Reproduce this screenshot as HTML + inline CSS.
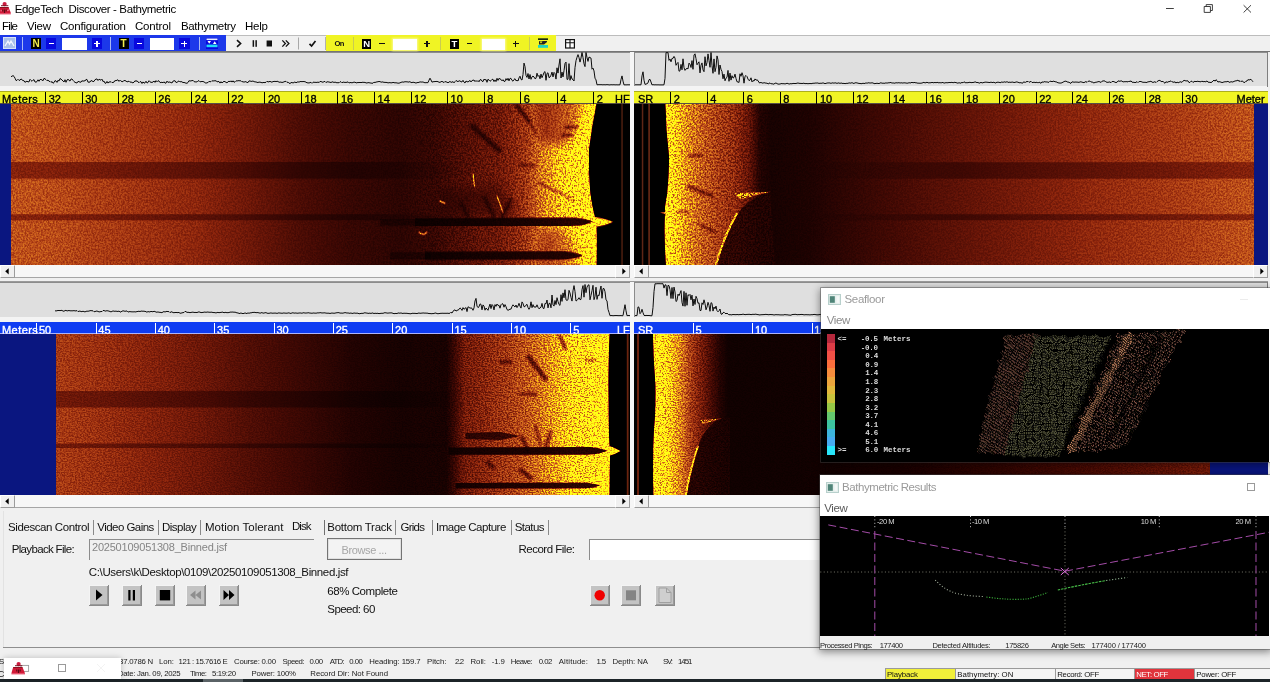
<!DOCTYPE html>
<html><head><meta charset="utf-8"><title>EdgeTech Discover - Bathymetric</title>
<style>
html,body{margin:0;padding:0;}
body{width:1270px;height:682px;overflow:hidden;background:#f0f0f0;position:relative;font-family:'Liberation Sans',sans-serif;}
div,span,svg{position:absolute;display:block;}
body{will-change:transform;}
span{white-space:pre;}
</style></head>
<body>
<div style="left:0px;top:0px;width:1270px;height:35px;background:#fff;"></div>
<svg style="left:0;top:0" width="12" height="16" viewBox="0 0 12 16"><ellipse cx="4.6" cy="4.1" rx="2.1" ry="2.2" fill="#cc1c40"/><rect x="1" y="5.2" width="7.3" height="1" fill="#7c1424"/><path d="M0 7 L8.4 7 L10.7 12.6 L10.7 13 L0 13 Z" fill="#d21a38"/><rect x="0" y="7" width="8.6" height="1.1" fill="#8a1020"/><path d="M2.2 9.6 h1.1 v2 h-1.1 z M5.6 9.6 h1.1 v2 h-1.1 z M3.9 9.4 h1.2 v3.8 h-1.2 z" fill="#5a0c14"/><path d="M0.5 10.2 h1.4 v1 h-1.4 z M7.2 10 l1.8 -0.6 v1.2 l-1.8 .6 z" fill="#f08098"/><rect x="0" y="13" width="10.8" height="1.4" fill="#e4506a"/></svg>
<span style="left:14.80px;top:3.83px;font-size:11.5px;line-height:11.5px;color:#000;letter-spacing:-0.378px;">EdgeTech  Discover - Bathymetric</span>
<svg style="left:1160px;top:0" width="110" height="18" viewBox="0 0 110 18"><g stroke="#2a2a2a" stroke-width="0.9" fill="none"><path d="M6 8.5 H13.8"/><path d="M44.2 6.5 H50.4 V12.4 H44.2 Z"/><path d="M46.2 6.5 V4.6 H52.4 V10.5 H50.4"/><path d="M83.6 5.2 L91 12.5 M91 5.2 L83.6 12.5"/></g></svg>
<span style="left:2.00px;top:21.32px;font-size:11.5px;line-height:11.5px;color:#000;letter-spacing:-0.844px;">File</span>
<span style="left:27.00px;top:21.32px;font-size:11.5px;line-height:11.5px;color:#000;letter-spacing:-0.240px;">View</span>
<span style="left:60.00px;top:21.32px;font-size:11.5px;line-height:11.5px;color:#000;letter-spacing:-0.201px;">Configuration</span>
<span style="left:135.00px;top:21.32px;font-size:11.5px;line-height:11.5px;color:#000;letter-spacing:-0.180px;">Control</span>
<span style="left:181.00px;top:21.32px;font-size:11.5px;line-height:11.5px;color:#000;letter-spacing:-0.352px;">Bathymetry</span>
<span style="left:245.00px;top:21.32px;font-size:11.5px;line-height:11.5px;color:#000;letter-spacing:-0.219px;">Help</span>
<div style="left:0px;top:35px;width:1270px;height:17px;background:#f0f0f0;"></div>
<div style="left:0px;top:35px;width:225.5px;height:16.5px;background:#1c38ea;"></div>
<div style="left:326px;top:35px;width:230px;height:16.5px;background:#f0f424;"></div>
<div style="left:0px;top:51px;width:1270px;height:1.4px;background:#747474;"></div>
<div style="left:225.5px;top:35px;width:100px;height:1px;background:#bcbcbc;"></div>
<div style="left:556px;top:35px;width:714px;height:1px;background:#bcbcbc;"></div>
<svg style="left:3px;top:37px" width="13" height="12" viewBox="0 0 13 12"><rect x="0.5" y="0.5" width="12" height="11" fill="#a9c0ea" stroke="#d8e2f6"/><path d="M2 9 L5 4 L6.5 7 L8 4 L11 9" stroke="#f4f6ff" stroke-width="1.3" fill="none"/></svg>
<div style="left:22px;top:37px;width:1px;height:13px;background:#a8b8f4;"></div>
<div style="left:110px;top:37px;width:1px;height:13px;background:#a8b8f4;"></div>
<div style="left:198.5px;top:37px;width:1px;height:13px;background:#a8b8f4;"></div>
<div style="left:31px;top:38px;width:10px;height:11px;background:#000;"></div>
<span style="left:32.40px;top:39.10px;font-size:10px;line-height:10px;color:#f4ee4a;font-weight:700;">N</span>
<div style="left:119px;top:38px;width:10px;height:11px;background:#000;"></div>
<span style="left:120.40px;top:39.10px;font-size:10px;line-height:10px;color:#f4ee4a;font-weight:700;">T</span>
<div style="left:46px;top:38px;width:10px;height:11px;background:#0808de;"></div>
<div style="left:48.5px;top:42.7px;width:5.5px;height:1.6px;background:#fff;"></div>
<div style="left:134px;top:38px;width:10px;height:11px;background:#0808de;"></div>
<div style="left:136.5px;top:42.7px;width:5.5px;height:1.6px;background:#fff;"></div>
<div style="left:91.5px;top:38px;width:10.5px;height:11px;background:#0808de;"></div>
<div style="left:93.8px;top:42.7px;width:6px;height:1.6px;background:#fff;"></div>
<div style="left:96.0px;top:40.5px;width:1.6px;height:6px;background:#fff;"></div>
<div style="left:179.0px;top:38px;width:10.5px;height:11px;background:#0808de;"></div>
<div style="left:181.3px;top:42.7px;width:6px;height:1.6px;background:#fff;"></div>
<div style="left:183.5px;top:40.5px;width:1.6px;height:6px;background:#fff;"></div>
<div style="left:61.5px;top:38px;width:25px;height:12px;background:#fff;"></div>
<div style="left:150px;top:38px;width:24px;height:12px;background:#fff;"></div>
<svg style="left:206px;top:38px" width="12" height="11" viewBox="0 0 12 11"><rect width="12" height="11" fill="#0808de"/><rect x="0.5" y="0.5" width="11" height="1.6" fill="#e8f0ff"/><path d="M1.5 3 L5 3 L3.2 5.8 Z M7 6 L10.5 6 L8.7 3.2 Z" fill="#fff"/><rect x="0.5" y="6.6" width="11" height="2.6" fill="#22d8f8"/></svg>
<svg style="left:230px;top:36px" width="95" height="15" viewBox="0 0 95 15"><g fill="none" stroke="#111" stroke-width="1.6"><path d="M7 4.2 L10.6 7.5 L7 10.8"/><path d="M52.3 4.4 L55.4 7.5 L52.3 10.6 M55.8 4.4 L58.9 7.5 L55.8 10.6" stroke-width="1.3"/><path d="M79.5 7.8 L81.6 10 L85.5 5" stroke-width="1.7"/></g><rect x="22.6" y="4.2" width="1.5" height="6.6" fill="#111"/><rect x="25.4" y="4.2" width="1.5" height="6.6" fill="#111"/><rect x="36.6" y="4.5" width="5.4" height="6" fill="#111"/><rect x="68" y="1.5" width="1" height="12" fill="#a8a8a8"/></svg>
<span style="left:334.50px;top:40.18px;font-size:7.6px;line-height:7.6px;color:#111;font-weight:700;letter-spacing:-0.547px;">On</span>
<div style="left:325px;top:37px;width:1px;height:13px;background:#b0b0b0;"></div>
<div style="left:352.5px;top:37px;width:1px;height:13px;background:#c9cc52;"></div>
<div style="left:440px;top:37px;width:1px;height:13px;background:#c9cc52;"></div>
<div style="left:528.5px;top:37px;width:1px;height:13px;background:#c9cc52;"></div>
<div style="left:362px;top:38.5px;width:9px;height:10px;background:#000;"></div>
<span style="left:363.30px;top:39.33px;font-size:9.5px;line-height:9.5px;color:#fff;font-weight:700;">N</span>
<div style="left:450px;top:38.5px;width:9px;height:10px;background:#000;"></div>
<span style="left:451.60px;top:39.33px;font-size:9.5px;line-height:9.5px;color:#fff;font-weight:700;">T</span>
<div style="left:379px;top:42.8px;width:5.5px;height:1.5px;background:#111;"></div>
<div style="left:466.5px;top:42.8px;width:5.5px;height:1.5px;background:#111;"></div>
<div style="left:424px;top:42.8px;width:6px;height:1.5px;background:#111;"></div>
<div style="left:426.25px;top:40.5px;width:1.5px;height:6px;background:#111;"></div>
<div style="left:512.5px;top:42.8px;width:6px;height:1.5px;background:#111;"></div>
<div style="left:514.75px;top:40.5px;width:1.5px;height:6px;background:#111;"></div>
<div style="left:393px;top:38.5px;width:24px;height:11px;background:#fff;box-shadow:0 0 2px 1px #fafa90"></div>
<div style="left:482px;top:38.5px;width:22.5px;height:11px;background:#fff;box-shadow:0 0 2px 1px #fafa90"></div>
<svg style="left:537.5px;top:38px" width="10" height="11" viewBox="0 0 10 11"><rect x="0" y="0.3" width="10" height="1.7" fill="#1a2a10"/><path d="M1 3 L9 3 L9 4 L6 6.6 L1 6.6 Z" fill="#222"/><path d="M1.5 3.4 L4.5 3.4 L3 5.6 Z" fill="#f1f322"/><rect x="0" y="7" width="10" height="2.8" fill="#1fd6c0"/></svg>
<svg style="left:564.5px;top:38.5px" width="10" height="10" viewBox="0 0 10 10"><rect x="0.6" y="0.6" width="8.8" height="8.4" fill="#fff" stroke="#111" stroke-width="1.2"/><path d="M5 0.6 V9 M0.6 3.8 H9.4" stroke="#111" stroke-width="1.1"/></svg>
<div style="left:0px;top:52px;width:630px;height:35px;background:#dfdfdf;"></div>
<div style="left:0px;top:51.5px;width:630px;height:1.2px;background:#8c8c8c;"></div>
<div style="left:0px;top:86px;width:630px;height:5px;background:#f4f4f4;"></div>
<div style="left:634px;top:52px;width:634px;height:35px;background:#dfdfdf;"></div>
<div style="left:634px;top:51.5px;width:634px;height:1.2px;background:#8c8c8c;"></div>
<div style="left:634px;top:52px;width:1.2px;height:35px;background:#8c8c8c;"></div>
<div style="left:634px;top:86px;width:634px;height:5px;background:#f4f4f4;"></div>
<div style="left:630px;top:52px;width:3.8px;height:226px;background:#f6f6f6;"></div>
<div style="left:630px;top:282px;width:3.8px;height:226px;background:#f6f6f6;"></div>
<div style="left:1268px;top:52px;width:2px;height:460px;background:#f0f0f0;"></div>
<div style="left:0px;top:278px;width:1270px;height:4px;background:#f0f0f0;"></div>
<div style="left:0px;top:281px;width:1268px;height:1px;background:#9a9a9a;"></div>
<div style="left:0px;top:282px;width:630px;height:36px;background:#dfdfdf;"></div>
<div style="left:0px;top:281.5px;width:630px;height:1.2px;background:#8c8c8c;"></div>
<div style="left:0px;top:317px;width:630px;height:5px;background:#f4f4f4;"></div>
<div style="left:634px;top:282px;width:634px;height:36px;background:#dfdfdf;"></div>
<div style="left:634px;top:281.5px;width:634px;height:1.2px;background:#8c8c8c;"></div>
<div style="left:634px;top:282px;width:1.2px;height:36px;background:#8c8c8c;"></div>
<div style="left:634px;top:317px;width:634px;height:5px;background:#f4f4f4;"></div>
<div style="left:1267.3px;top:282px;width:1.2px;height:36px;background:#7a7a7a;"></div>
<div style="left:1267.3px;top:52px;width:1.2px;height:35px;background:#7e7e7e;"></div>
<div style="left:0px;top:91.3px;width:630px;height:12.2px;background:#f0f424;"></div>
<div style="left:634px;top:91.3px;width:633.5px;height:12.2px;background:#f0f424;"></div>
<div style="left:0px;top:322.3px;width:630px;height:11.7px;background:#0e3cf2;"></div>
<div style="left:634px;top:322.3px;width:633.5px;height:11.7px;background:#0e3cf2;"></div>
<span style="left:2.00px;top:94.05px;font-size:11px;line-height:11px;color:#000;letter-spacing:0.435px;-webkit-text-stroke:0.35px #000;">Meters</span>
<div style="left:45.15999999999997px;top:91.5px;width:1px;height:12px;background:#000;"></div>
<span style="left:48.66px;top:94.05px;font-size:11px;line-height:11px;color:#000;-webkit-text-stroke:0.35px #000;">32</span>
<div style="left:81.69999999999993px;top:91.5px;width:1px;height:12px;background:#000;"></div>
<span style="left:85.20px;top:94.05px;font-size:11px;line-height:11px;color:#000;-webkit-text-stroke:0.35px #000;">30</span>
<div style="left:118.23999999999995px;top:91.5px;width:1px;height:12px;background:#000;"></div>
<span style="left:121.74px;top:94.05px;font-size:11px;line-height:11px;color:#000;-webkit-text-stroke:0.35px #000;">28</span>
<div style="left:154.77999999999997px;top:91.5px;width:1px;height:12px;background:#000;"></div>
<span style="left:158.28px;top:94.05px;font-size:11px;line-height:11px;color:#000;-webkit-text-stroke:0.35px #000;">26</span>
<div style="left:191.31999999999994px;top:91.5px;width:1px;height:12px;background:#000;"></div>
<span style="left:194.82px;top:94.05px;font-size:11px;line-height:11px;color:#000;-webkit-text-stroke:0.35px #000;">24</span>
<div style="left:227.85999999999996px;top:91.5px;width:1px;height:12px;background:#000;"></div>
<span style="left:231.36px;top:94.05px;font-size:11px;line-height:11px;color:#000;-webkit-text-stroke:0.35px #000;">22</span>
<div style="left:264.4px;top:91.5px;width:1px;height:12px;background:#000;"></div>
<span style="left:267.90px;top:94.05px;font-size:11px;line-height:11px;color:#000;-webkit-text-stroke:0.35px #000;">20</span>
<div style="left:300.93999999999994px;top:91.5px;width:1px;height:12px;background:#000;"></div>
<span style="left:304.44px;top:94.05px;font-size:11px;line-height:11px;color:#000;-webkit-text-stroke:0.35px #000;">18</span>
<div style="left:337.47999999999996px;top:91.5px;width:1px;height:12px;background:#000;"></div>
<span style="left:340.98px;top:94.05px;font-size:11px;line-height:11px;color:#000;-webkit-text-stroke:0.35px #000;">16</span>
<div style="left:374.02px;top:91.5px;width:1px;height:12px;background:#000;"></div>
<span style="left:377.52px;top:94.05px;font-size:11px;line-height:11px;color:#000;-webkit-text-stroke:0.35px #000;">14</span>
<div style="left:410.55999999999995px;top:91.5px;width:1px;height:12px;background:#000;"></div>
<span style="left:414.06px;top:94.05px;font-size:11px;line-height:11px;color:#000;-webkit-text-stroke:0.35px #000;">12</span>
<div style="left:447.09999999999997px;top:91.5px;width:1px;height:12px;background:#000;"></div>
<span style="left:450.60px;top:94.05px;font-size:11px;line-height:11px;color:#000;-webkit-text-stroke:0.35px #000;">10</span>
<div style="left:483.64px;top:91.5px;width:1px;height:12px;background:#000;"></div>
<span style="left:487.14px;top:94.05px;font-size:11px;line-height:11px;color:#000;-webkit-text-stroke:0.35px #000;">8</span>
<div style="left:520.18px;top:91.5px;width:1px;height:12px;background:#000;"></div>
<span style="left:523.68px;top:94.05px;font-size:11px;line-height:11px;color:#000;-webkit-text-stroke:0.35px #000;">6</span>
<div style="left:556.7199999999999px;top:91.5px;width:1px;height:12px;background:#000;"></div>
<span style="left:560.22px;top:94.05px;font-size:11px;line-height:11px;color:#000;-webkit-text-stroke:0.35px #000;">4</span>
<div style="left:593.26px;top:91.5px;width:1px;height:12px;background:#000;"></div>
<span style="left:596.76px;top:94.05px;font-size:11px;line-height:11px;color:#000;-webkit-text-stroke:0.35px #000;">2</span>
<span style="left:615.00px;top:94.05px;font-size:11px;line-height:11px;color:#000;-webkit-text-stroke:0.35px #000;">HF</span>
<span style="left:638.00px;top:94.05px;font-size:11px;line-height:11px;color:#000;-webkit-text-stroke:0.35px #000;">SR</span>
<div style="left:670.24px;top:91.5px;width:1px;height:12px;background:#000;"></div>
<span style="left:673.74px;top:94.05px;font-size:11px;line-height:11px;color:#000;-webkit-text-stroke:0.35px #000;">2</span>
<div style="left:706.7800000000001px;top:91.5px;width:1px;height:12px;background:#000;"></div>
<span style="left:710.28px;top:94.05px;font-size:11px;line-height:11px;color:#000;-webkit-text-stroke:0.35px #000;">4</span>
<div style="left:743.32px;top:91.5px;width:1px;height:12px;background:#000;"></div>
<span style="left:746.82px;top:94.05px;font-size:11px;line-height:11px;color:#000;-webkit-text-stroke:0.35px #000;">6</span>
<div style="left:779.86px;top:91.5px;width:1px;height:12px;background:#000;"></div>
<span style="left:783.36px;top:94.05px;font-size:11px;line-height:11px;color:#000;-webkit-text-stroke:0.35px #000;">8</span>
<div style="left:816.4000000000001px;top:91.5px;width:1px;height:12px;background:#000;"></div>
<span style="left:819.90px;top:94.05px;font-size:11px;line-height:11px;color:#000;-webkit-text-stroke:0.35px #000;">10</span>
<div style="left:852.94px;top:91.5px;width:1px;height:12px;background:#000;"></div>
<span style="left:856.44px;top:94.05px;font-size:11px;line-height:11px;color:#000;-webkit-text-stroke:0.35px #000;">12</span>
<div style="left:889.48px;top:91.5px;width:1px;height:12px;background:#000;"></div>
<span style="left:892.98px;top:94.05px;font-size:11px;line-height:11px;color:#000;-webkit-text-stroke:0.35px #000;">14</span>
<div style="left:926.02px;top:91.5px;width:1px;height:12px;background:#000;"></div>
<span style="left:929.52px;top:94.05px;font-size:11px;line-height:11px;color:#000;-webkit-text-stroke:0.35px #000;">16</span>
<div style="left:962.5600000000001px;top:91.5px;width:1px;height:12px;background:#000;"></div>
<span style="left:966.06px;top:94.05px;font-size:11px;line-height:11px;color:#000;-webkit-text-stroke:0.35px #000;">18</span>
<div style="left:999.1px;top:91.5px;width:1px;height:12px;background:#000;"></div>
<span style="left:1002.60px;top:94.05px;font-size:11px;line-height:11px;color:#000;-webkit-text-stroke:0.35px #000;">20</span>
<div style="left:1035.64px;top:91.5px;width:1px;height:12px;background:#000;"></div>
<span style="left:1039.14px;top:94.05px;font-size:11px;line-height:11px;color:#000;-webkit-text-stroke:0.35px #000;">22</span>
<div style="left:1072.18px;top:91.5px;width:1px;height:12px;background:#000;"></div>
<span style="left:1075.68px;top:94.05px;font-size:11px;line-height:11px;color:#000;-webkit-text-stroke:0.35px #000;">24</span>
<div style="left:1108.72px;top:91.5px;width:1px;height:12px;background:#000;"></div>
<span style="left:1112.22px;top:94.05px;font-size:11px;line-height:11px;color:#000;-webkit-text-stroke:0.35px #000;">26</span>
<div style="left:1145.26px;top:91.5px;width:1px;height:12px;background:#000;"></div>
<span style="left:1148.76px;top:94.05px;font-size:11px;line-height:11px;color:#000;-webkit-text-stroke:0.35px #000;">28</span>
<div style="left:1181.8px;top:91.5px;width:1px;height:12px;background:#000;"></div>
<span style="left:1185.30px;top:94.05px;font-size:11px;line-height:11px;color:#000;-webkit-text-stroke:0.35px #000;">30</span>
<span style="left:1236.50px;top:94.05px;font-size:11px;line-height:11px;color:#000;-webkit-text-stroke:0.35px #000;">Meter</span>
<div style="left:0px;top:102.8px;width:630px;height:1px;background:rgba(20,10,0,0.7);"></div>
<div style="left:634px;top:102.8px;width:633.5px;height:1px;background:rgba(20,10,0,0.7);"></div>
<div style="left:0px;top:91px;width:630px;height:0.9px;background:rgba(90,90,20,0.45);"></div>
<div style="left:634px;top:91px;width:633.5px;height:0.9px;background:rgba(90,90,20,0.45);"></div>
<span style="left:2.00px;top:324.65px;font-size:11px;line-height:11px;color:#fff;letter-spacing:0.435px;-webkit-text-stroke:0.35px #fff;">Meters</span>
<div style="left:36.299999999999955px;top:322.5px;width:1px;height:12px;background:#fff;"></div>
<span style="left:39.00px;top:324.65px;font-size:11px;line-height:11px;color:#fff;-webkit-text-stroke:0.35px #fff;">50</span>
<div style="left:95.64999999999998px;top:322.5px;width:1px;height:12px;background:#fff;"></div>
<span style="left:98.35px;top:324.65px;font-size:11px;line-height:11px;color:#fff;-webkit-text-stroke:0.35px #fff;">45</span>
<div style="left:155.0px;top:322.5px;width:1px;height:12px;background:#fff;"></div>
<span style="left:157.70px;top:324.65px;font-size:11px;line-height:11px;color:#fff;-webkit-text-stroke:0.35px #fff;">40</span>
<div style="left:214.34999999999997px;top:322.5px;width:1px;height:12px;background:#fff;"></div>
<span style="left:217.05px;top:324.65px;font-size:11px;line-height:11px;color:#fff;-webkit-text-stroke:0.35px #fff;">35</span>
<div style="left:273.7px;top:322.5px;width:1px;height:12px;background:#fff;"></div>
<span style="left:276.40px;top:324.65px;font-size:11px;line-height:11px;color:#fff;-webkit-text-stroke:0.35px #fff;">30</span>
<div style="left:333.04999999999995px;top:322.5px;width:1px;height:12px;background:#fff;"></div>
<span style="left:335.75px;top:324.65px;font-size:11px;line-height:11px;color:#fff;-webkit-text-stroke:0.35px #fff;">25</span>
<div style="left:392.4px;top:322.5px;width:1px;height:12px;background:#fff;"></div>
<span style="left:395.10px;top:324.65px;font-size:11px;line-height:11px;color:#fff;-webkit-text-stroke:0.35px #fff;">20</span>
<div style="left:451.75px;top:322.5px;width:1px;height:12px;background:#fff;"></div>
<span style="left:454.45px;top:324.65px;font-size:11px;line-height:11px;color:#fff;-webkit-text-stroke:0.35px #fff;">15</span>
<div style="left:511.09999999999997px;top:322.5px;width:1px;height:12px;background:#fff;"></div>
<span style="left:513.80px;top:324.65px;font-size:11px;line-height:11px;color:#fff;-webkit-text-stroke:0.35px #fff;">10</span>
<div style="left:570.4499999999999px;top:322.5px;width:1px;height:12px;background:#fff;"></div>
<span style="left:573.15px;top:324.65px;font-size:11px;line-height:11px;color:#fff;-webkit-text-stroke:0.35px #fff;">5</span>
<span style="left:617.00px;top:324.65px;font-size:11px;line-height:11px;color:#fff;-webkit-text-stroke:0.35px #fff;">LF</span>
<span style="left:638.00px;top:324.65px;font-size:11px;line-height:11px;color:#fff;-webkit-text-stroke:0.35px #fff;">SR</span>
<div style="left:693.0500000000001px;top:322.5px;width:1px;height:12px;background:#fff;"></div>
<span style="left:695.55px;top:324.65px;font-size:11px;line-height:11px;color:#fff;-webkit-text-stroke:0.35px #fff;">5</span>
<div style="left:752.4000000000001px;top:322.5px;width:1px;height:12px;background:#fff;"></div>
<span style="left:754.90px;top:324.65px;font-size:11px;line-height:11px;color:#fff;-webkit-text-stroke:0.35px #fff;">10</span>
<div style="left:811.75px;top:322.5px;width:1px;height:12px;background:#fff;"></div>
<span style="left:814.25px;top:324.65px;font-size:11px;line-height:11px;color:#fff;-webkit-text-stroke:0.35px #fff;">15</span>
<div style="left:0px;top:333px;width:630px;height:1.1px;background:rgba(225,220,255,0.75);"></div>
<div style="left:634px;top:333px;width:633.5px;height:1.1px;background:rgba(225,220,255,0.75);"></div>
<svg style="left:0px;top:52px" width="630" height="35" viewBox="0 52 630 35"><path d="M11.0 76.6 L12.0 76.3 L13.0 75.5 L14.0 76.4 L15.0 78.2 L16.0 80.5 L17.0 80.3 L18.0 79.3 L19.0 80.4 L20.0 80.2 L21.0 78.9 L22.0 79.8 L23.0 80.6 L24.0 80.7 L25.0 82.4 L26.0 81.5 L27.0 81.3 L28.0 81.8 L29.0 81.9 L30.0 79.3 L31.0 80.4 L32.0 81.3 L33.0 80.2 L34.0 79.6 L35.0 82.0 L36.0 82.1 L37.0 81.6 L38.0 79.8 L39.0 81.3 L40.0 79.5 L41.0 79.5 L42.0 79.9 L43.0 80.8 L44.0 78.4 L45.0 78.8 L46.0 79.7 L47.0 80.7 L48.0 80.0 L49.0 81.4 L50.0 81.4 L51.0 82.4 L52.0 81.5 L53.0 83.2 L54.0 82.6 L55.0 80.6 L56.0 81.0 L57.0 82.4 L58.0 80.2 L59.0 81.1 L60.0 78.6 L61.0 79.0 L62.0 80.1 L63.0 80.9 L64.0 82.0 L65.0 79.7 L66.0 82.3 L67.0 80.0 L68.0 79.3 L69.0 80.2 L70.0 81.1 L71.0 79.0 L72.0 79.0 L73.0 80.3 L74.0 81.5 L75.0 82.4 L76.0 82.7 L77.0 83.0 L78.0 81.4 L79.0 81.7 L80.0 82.1 L81.0 82.2 L82.0 80.6 L83.0 81.4 L84.0 80.7 L85.0 81.0 L86.0 79.4 L87.0 79.5 L88.0 82.2 L89.0 82.1 L90.0 82.1 L91.0 80.5 L92.0 80.9 L93.0 81.6 L94.0 81.4 L95.0 79.7 L96.0 79.2 L97.0 78.9 L98.0 80.5 L99.0 79.2 L100.0 79.7 L101.0 80.2 L102.0 79.2 L103.0 81.6 L104.0 81.1 L105.0 83.2 L106.0 83.2 L107.0 81.4 L108.0 83.1 L109.0 81.8 L110.0 82.2 L111.0 81.6 L112.0 82.6 L113.0 82.4 L114.0 82.1 L115.0 80.4 L116.0 80.9 L117.0 80.0 L118.0 79.9 L119.0 81.4 L120.0 80.2 L121.0 81.2 L122.0 81.5 L123.0 81.7 L124.0 80.3 L125.0 80.8 L126.0 80.8 L127.0 82.0 L128.0 81.5 L129.0 81.2 L130.0 82.3 L131.0 81.8 L132.0 82.6 L133.0 82.8 L134.0 82.2 L135.0 80.7 L136.0 81.4 L137.0 80.7 L138.0 82.0 L139.0 82.7 L140.0 81.7 L141.0 81.7 L142.0 83.5 L143.0 81.9 L144.0 83.1 L145.0 82.9 L146.0 81.2 L147.0 83.0 L148.0 82.5 L149.0 80.7 L150.0 81.8 L151.0 82.4 L152.0 82.3 L153.0 82.1 L154.0 81.0 L155.0 82.4 L156.0 80.6 L157.0 81.8 L158.0 80.7 L159.0 81.0 L160.0 82.5 L161.0 82.6 L162.0 82.1 L163.0 82.9 L164.0 81.8 L165.0 83.1 L166.0 83.1 L167.0 81.1 L168.0 82.5 L169.0 81.9 L170.0 82.2 L171.0 82.5 L172.0 83.0 L173.0 81.1 L174.0 80.9 L175.0 80.7 L176.0 82.5 L177.0 82.3 L178.0 81.6 L179.0 80.9 L180.0 81.9 L181.0 81.6 L182.0 81.8 L183.0 82.7 L184.0 82.3 L185.0 82.9 L186.0 83.1 L187.0 83.3 L188.0 82.5 L189.0 80.6 L190.0 81.2 L191.0 80.7 L192.0 80.8 L193.0 80.3 L194.0 81.6 L195.0 81.9 L196.0 81.9 L197.0 81.9 L198.0 80.9 L199.0 80.7 L200.0 81.8 L201.0 81.7 L202.0 81.4 L203.0 81.6 L204.0 81.8 L205.0 82.7 L206.0 83.2 L207.0 82.7 L208.0 82.6 L209.0 81.3 L210.0 81.8 L211.0 81.6 L212.0 80.6 L213.0 81.3 L214.0 80.5 L215.0 81.1 L216.0 80.5 L217.0 81.9 L218.0 81.6 L219.0 81.5 L220.0 83.1 L221.0 81.7 L222.0 83.0 L223.0 81.9 L224.0 81.4 L225.0 81.6 L226.0 82.4 L227.0 82.8 L228.0 81.9 L229.0 81.0 L230.0 81.9 L231.0 80.8 L232.0 82.1 L233.0 80.8 L234.0 82.3 L235.0 81.8 L236.0 80.8 L237.0 81.0 L238.0 80.7 L239.0 80.7 L240.0 80.8 L241.0 80.8 L242.0 81.8 L243.0 81.6 L244.0 82.3 L245.0 81.6 L246.0 81.8 L247.0 82.4 L248.0 82.6 L249.0 80.9 L250.0 81.0 L251.0 81.3 L252.0 81.4 L253.0 80.9 L254.0 81.7 L255.0 81.8 L256.0 82.0 L257.0 82.2 L258.0 82.7 L259.0 81.9 L260.0 82.4 L261.0 82.2 L262.0 83.0 L263.0 82.4 L264.0 82.6 L265.0 82.5 L266.0 82.3 L267.0 81.3 L268.0 81.9 L269.0 81.8 L270.0 81.3 L271.0 81.9 L272.0 82.2 L273.0 81.5 L274.0 81.5 L275.0 81.3 L276.0 81.6 L277.0 81.3 L278.0 81.4 L279.0 82.3 L280.0 82.1 L281.0 82.1 L282.0 82.5 L283.0 82.2 L284.0 81.9 L285.0 81.4 L286.0 81.4 L287.0 82.4 L288.0 82.1 L289.0 83.2 L290.0 83.4 L291.0 82.8 L292.0 82.3 L293.0 83.2 L294.0 82.3 L295.0 82.0 L296.0 82.8 L297.0 82.2 L298.0 81.8 L299.0 82.2 L300.0 81.6 L301.0 81.5 L302.0 81.7 L303.0 81.5 L304.0 81.6 L305.0 81.7 L306.0 82.2 L307.0 82.8 L308.0 82.8 L309.0 83.0 L310.0 82.6 L311.0 82.3 L312.0 83.3 L313.0 82.3 L314.0 82.1 L315.0 82.5 L316.0 82.2 L317.0 82.6 L318.0 81.9 L319.0 82.7 L320.0 81.4 L321.0 81.6 L322.0 81.9 L323.0 82.4 L324.0 81.5 L325.0 81.5 L326.0 82.6 L327.0 81.8 L328.0 81.8 L329.0 82.1 L330.0 82.2 L331.0 82.6 L332.0 81.9 L333.0 81.9 L334.0 82.6 L335.0 82.0 L336.0 82.5 L337.0 82.8 L338.0 82.6 L339.0 82.8 L340.0 81.8 L341.0 81.8 L342.0 82.8 L343.0 82.1 L344.0 82.2 L345.0 82.5 L346.0 82.3 L347.0 82.4 L348.0 81.8 L349.0 82.9 L350.0 82.7 L351.0 82.4 L352.0 83.0 L353.0 82.3 L354.0 82.3 L355.0 82.1 L356.0 82.9 L357.0 82.8 L358.0 82.4 L359.0 82.7 L360.0 82.3 L361.0 82.7 L362.0 82.3 L363.0 82.3 L364.0 82.4 L365.0 82.4 L366.0 82.9 L367.0 83.0 L368.0 82.6 L369.0 82.7 L370.0 82.9 L371.0 83.1 L372.0 83.2 L373.0 83.2 L374.0 82.1 L375.0 82.7 L376.0 81.9 L377.0 82.1 L378.0 81.5 L379.0 81.7 L380.0 81.4 L381.0 82.3 L382.0 81.9 L383.0 82.0 L384.0 82.4 L385.0 82.3 L386.0 82.5 L387.0 82.4 L388.0 83.0 L389.0 82.6 L390.0 82.7 L391.0 82.8 L392.0 82.8 L393.0 82.4 L394.0 82.6 L395.0 82.9 L396.0 82.7 L397.0 83.0 L398.0 83.1 L399.0 83.2 L400.0 82.8 L401.0 82.4 L402.0 82.0 L403.0 82.0 L404.0 82.2 L405.0 81.5 L406.0 82.0 L407.0 81.6 L408.0 82.2 L409.0 81.9 L410.0 81.7 L411.0 82.5 L412.0 82.6 L413.0 82.2 L414.0 82.4 L415.0 82.7 L416.0 83.1 L417.0 82.6 L418.0 82.5 L419.0 82.4 L420.0 81.8 L421.0 82.1 L422.0 82.0 L423.0 82.0 L424.0 82.4 L425.0 82.8 L426.0 82.6 L427.0 82.7 L428.0 82.6 L429.0 80.2 L430.0 78.2 L431.0 80.0 L432.0 82.2 L433.0 81.7 L434.0 81.7 L435.0 81.5 L436.0 81.5 L437.0 81.4 L438.0 81.7 L439.0 82.2 L440.0 82.4 L441.0 81.7 L442.0 81.4 L443.0 81.9 L444.0 82.6 L445.0 81.4 L446.0 82.0 L447.0 82.0 L448.0 82.9 L449.0 82.0 L450.0 81.5 L451.0 82.2 L452.0 82.3 L453.0 81.5 L454.0 82.9 L455.0 81.6 L456.0 80.5 L457.0 81.1 L458.0 81.7 L459.0 80.8 L460.0 80.9 L461.0 81.8 L462.0 81.9 L463.0 80.3 L464.0 82.2 L465.0 83.0 L466.0 81.0 L467.0 81.7 L468.0 81.9 L469.0 81.3 L470.0 80.4 L471.0 82.0 L472.0 80.5 L473.0 80.3 L474.0 80.0 L475.0 81.6 L476.0 80.5 L477.0 81.6 L478.0 80.6 L479.0 81.8 L480.0 79.8 L481.0 79.5 L482.0 81.2 L483.0 81.6 L484.0 79.1 L485.0 80.0 L486.0 79.5 L487.0 82.3 L488.0 79.2 L489.0 80.1 L490.0 81.2 L491.0 80.7 L492.0 79.4 L493.0 79.3 L494.0 81.6 L495.0 79.9 L496.0 81.6 L497.0 78.3 L498.0 80.4 L499.0 78.3 L500.0 79.0 L501.0 79.4 L502.0 80.9 L503.0 79.7 L504.0 81.4 L505.0 81.4 L506.0 78.6 L507.0 80.2 L508.0 78.3 L509.0 80.9 L510.0 78.4 L511.0 78.4 L512.0 80.4 L513.0 81.2 L514.0 79.5 L515.0 78.7 L516.0 80.8 L517.0 80.3 L518.0 81.0 L519.0 77.9 L520.0 76.2 L521.0 79.4 L522.0 80.0 L523.0 74.5 L524.0 63.1 L525.0 66.6 L526.0 75.4 L527.0 77.4 L528.0 73.5 L529.0 79.0 L530.0 74.5 L531.0 79.3 L532.0 76.8 L533.0 76.0 L534.0 77.0 L535.0 78.8 L536.0 78.3 L537.0 73.2 L538.0 76.4 L539.0 75.4 L540.0 78.8 L541.0 74.1 L542.0 77.7 L543.0 75.3 L544.0 72.4 L545.0 71.6 L546.0 80.3 L547.0 73.4 L548.0 72.8 L549.0 77.7 L550.0 77.1 L551.0 75.2 L552.0 72.1 L553.0 76.9 L554.0 72.4 L555.0 73.5 L556.0 79.1 L557.0 67.8 L558.0 73.1 L559.0 65.0 L560.0 58.8 L561.0 78.0 L562.0 72.1 L563.0 76.9 L564.0 70.7 L565.0 63.4 L566.0 62.1 L567.0 79.4 L568.0 79.2 L569.0 63.6 L570.0 80.3 L571.0 75.6 L572.0 79.0 L573.0 79.6 L574.0 81.0 L575.0 67.5 L576.0 60.7 L577.0 57.3 L578.0 54.6 L579.0 57.6 L580.0 62.1 L581.0 58.0 L582.0 52.5 L583.0 57.5 L584.0 63.8 L585.0 66.6 L586.0 52.5 L587.0 57.6 L588.0 61.4 L589.0 57.0 L590.0 57.6 L591.0 58.1 L592.0 69.2 L593.0 68.1 L594.0 70.9 L595.0 78.2 L596.0 79.9 L597.0 84.8 L598.0 84.7 L599.0 84.7 L600.0 84.7 L601.0 84.7 L602.0 84.7 L603.0 84.9 L604.0 84.6 L605.0 84.9 L606.0 84.7 L607.0 84.7 L608.0 84.7 L609.0 84.9 L610.0 84.9 L611.0 84.7 L612.0 84.8 L613.0 84.8 L614.0 84.7 L615.0 84.9 L616.0 84.8 L617.0 84.8 L618.0 84.9 L619.0 84.8 L620.0 84.8 L621.0 79.5 L622.0 75.9 L623.0 81.1 L624.0 84.9 L625.0 84.8 L626.0 84.9 L627.0 84.8 L628.0 84.8 L629.0 84.8 L630.0 84.8" fill="none" stroke="#0c0c0c" stroke-width="1.0" stroke-linejoin="round"/></svg>
<svg style="left:634px;top:52px" width="634" height="35" viewBox="634 52 634 35"><path d="M635.0 84.8 L636.0 84.8 L637.0 84.8 L638.0 84.8 L639.0 84.8 L640.0 84.8 L641.0 84.8 L642.0 75.9 L643.0 71.8 L644.0 80.2 L645.0 84.4 L646.0 84.1 L647.0 83.7 L648.0 82.9 L649.0 79.7 L650.0 79.3 L651.0 82.0 L652.0 84.9 L653.0 84.6 L654.0 84.9 L655.0 84.8 L656.0 84.8 L657.0 84.9 L658.0 84.8 L659.0 84.9 L660.0 84.9 L661.0 84.9 L662.0 84.9 L663.0 84.9 L664.0 84.8 L665.0 78.4 L666.0 52.5 L667.0 52.8 L668.0 52.5 L669.0 60.4 L670.0 59.0 L671.0 61.8 L672.0 58.4 L673.0 58.4 L674.0 56.4 L675.0 58.1 L676.0 65.3 L677.0 63.5 L678.0 62.4 L679.0 71.2 L680.0 70.8 L681.0 64.4 L682.0 69.8 L683.0 58.8 L684.0 67.6 L685.0 70.4 L686.0 69.0 L687.0 68.3 L688.0 68.9 L689.0 63.1 L690.0 64.3 L691.0 67.5 L692.0 60.6 L693.0 69.3 L694.0 55.0 L695.0 53.8 L696.0 58.6 L697.0 64.8 L698.0 63.2 L699.0 61.8 L700.0 72.9 L701.0 65.2 L702.0 62.9 L703.0 69.9 L704.0 71.7 L705.0 56.7 L706.0 65.9 L707.0 62.6 L708.0 53.9 L709.0 60.4 L710.0 67.3 L711.0 52.5 L712.0 65.6 L713.0 73.3 L714.0 58.9 L715.0 71.7 L716.0 67.3 L717.0 55.9 L718.0 59.8 L719.0 74.5 L720.0 65.0 L721.0 69.3 L722.0 71.5 L723.0 78.8 L724.0 74.1 L725.0 80.8 L726.0 78.2 L727.0 77.3 L728.0 70.4 L729.0 81.3 L730.0 73.1 L731.0 80.1 L732.0 75.7 L733.0 78.1 L734.0 77.4 L735.0 74.1 L736.0 78.5 L737.0 81.8 L738.0 81.9 L739.0 82.5 L740.0 73.8 L741.0 76.3 L742.0 72.7 L743.0 75.7 L744.0 83.2 L745.0 76.3 L746.0 75.5 L747.0 76.5 L748.0 79.1 L749.0 80.6 L750.0 80.1 L751.0 77.8 L752.0 81.9 L753.0 80.5 L754.0 81.1 L755.0 78.9 L756.0 80.1 L757.0 79.9 L758.0 80.5 L759.0 82.6 L760.0 82.9 L761.0 82.3 L762.0 83.1 L763.0 83.0 L764.0 82.8 L765.0 82.8 L766.0 83.3 L767.0 83.0 L768.0 83.9 L769.0 83.6 L770.0 82.8 L771.0 83.9 L772.0 83.6 L773.0 84.1 L774.0 84.1 L775.0 83.2 L776.0 83.1 L777.0 83.5 L778.0 84.2 L779.0 84.0 L780.0 84.1 L781.0 83.6 L782.0 83.6 L783.0 83.8 L784.0 83.6 L785.0 84.0 L786.0 83.6 L787.0 83.3 L788.0 83.5 L789.0 84.1 L790.0 83.8 L791.0 83.6 L792.0 83.9 L793.0 83.3 L794.0 83.6 L795.0 83.4 L796.0 83.6 L797.0 83.1 L798.0 83.1 L799.0 83.2 L800.0 83.5 L801.0 83.3 L802.0 83.6 L803.0 83.3 L804.0 83.2 L805.0 83.7 L806.0 83.5 L807.0 83.6 L808.0 83.7 L809.0 83.6 L810.0 83.5 L811.0 83.6 L812.0 83.6 L813.0 83.1 L814.0 83.4 L815.0 83.0 L816.0 83.1 L817.0 83.0 L818.0 83.0 L819.0 83.5 L820.0 83.2 L821.0 83.3 L822.0 83.2 L823.0 82.9 L824.0 83.2 L825.0 83.7 L826.0 83.3 L827.0 83.1 L828.0 82.9 L829.0 83.0 L830.0 82.9 L831.0 83.5 L832.0 82.8 L833.0 83.0 L834.0 83.1 L835.0 82.9 L836.0 82.9 L837.0 83.5 L838.0 82.9 L839.0 83.0 L840.0 83.4 L841.0 83.0 L842.0 83.2 L843.0 83.6 L844.0 83.2 L845.0 83.8 L846.0 83.3 L847.0 83.4 L848.0 83.3 L849.0 82.9 L850.0 83.0 L851.0 83.2 L852.0 82.5 L853.0 83.3 L854.0 83.4 L855.0 82.9 L856.0 82.7 L857.0 83.0 L858.0 83.1 L859.0 83.5 L860.0 83.4 L861.0 83.7 L862.0 83.6 L863.0 83.2 L864.0 83.5 L865.0 83.4 L866.0 82.8 L867.0 83.3 L868.0 82.8 L869.0 82.8 L870.0 83.1 L871.0 82.9 L872.0 82.9 L873.0 82.9 L874.0 83.6 L875.0 83.6 L876.0 83.4 L877.0 83.3 L878.0 83.4 L879.0 83.6 L880.0 83.1 L881.0 82.7 L882.0 83.3 L883.0 83.1 L884.0 83.3 L885.0 83.2 L886.0 82.8 L887.0 83.2 L888.0 82.8 L889.0 82.8 L890.0 82.7 L891.0 82.4 L892.0 83.3 L893.0 82.7 L894.0 83.3 L895.0 83.0 L896.0 82.8 L897.0 82.8 L898.0 83.0 L899.0 82.5 L900.0 83.2 L901.0 82.7 L902.0 83.0 L903.0 83.0 L904.0 82.8 L905.0 82.9 L906.0 83.0 L907.0 83.2 L908.0 83.1 L909.0 82.7 L910.0 82.9 L911.0 82.9 L912.0 82.1 L913.0 83.0 L914.0 82.3 L915.0 82.7 L916.0 82.8 L917.0 82.9 L918.0 83.3 L919.0 83.0 L920.0 83.4 L921.0 83.0 L922.0 83.2 L923.0 82.5 L924.0 82.4 L925.0 82.9 L926.0 82.7 L927.0 82.2 L928.0 82.8 L929.0 82.9 L930.0 82.7 L931.0 82.8 L932.0 82.3 L933.0 82.7 L934.0 82.8 L935.0 82.3 L936.0 82.9 L937.0 82.3 L938.0 82.6 L939.0 82.9 L940.0 82.5 L941.0 83.0 L942.0 82.5 L943.0 82.5 L944.0 83.1 L945.0 82.9 L946.0 82.6 L947.0 82.8 L948.0 82.7 L949.0 82.5 L950.0 82.5 L951.0 82.6 L952.0 82.2 L953.0 82.9 L954.0 82.4 L955.0 82.3 L956.0 82.7 L957.0 82.8 L958.0 83.3 L959.0 82.5 L960.0 83.2 L961.0 83.0 L962.0 82.3 L963.0 82.9 L964.0 81.7 L965.0 82.6 L966.0 82.8 L967.0 82.6 L968.0 82.8 L969.0 82.3 L970.0 82.4 L971.0 82.5 L972.0 82.7 L973.0 82.3 L974.0 82.5 L975.0 81.7 L976.0 82.3 L977.0 82.6 L978.0 82.4 L979.0 83.1 L980.0 83.0 L981.0 82.2 L982.0 83.0 L983.0 82.7 L984.0 82.4 L985.0 82.2 L986.0 82.1 L987.0 82.3 L988.0 82.3 L989.0 82.5 L990.0 82.5 L991.0 82.1 L992.0 82.5 L993.0 82.5 L994.0 82.1 L995.0 83.0 L996.0 82.9 L997.0 82.0 L998.0 82.5 L999.0 82.0 L1000.0 82.9 L1001.0 82.3 L1002.0 81.9 L1003.0 82.5 L1004.0 81.8 L1005.0 82.0 L1006.0 82.3 L1007.0 81.5 L1008.0 82.4 L1009.0 82.3 L1010.0 82.1 L1011.0 82.5 L1012.0 81.9 L1013.0 82.3 L1014.0 82.4 L1015.0 82.5 L1016.0 81.9 L1017.0 82.0 L1018.0 82.2 L1019.0 82.7 L1020.0 82.8 L1021.0 82.6 L1022.0 83.2 L1023.0 82.9 L1024.0 81.6 L1025.0 82.8 L1026.0 81.6 L1027.0 81.8 L1028.0 81.3 L1029.0 82.3 L1030.0 81.9 L1031.0 81.3 L1032.0 82.5 L1033.0 82.5 L1034.0 82.2 L1035.0 82.5 L1036.0 82.6 L1037.0 82.1 L1038.0 83.1 L1039.0 82.1 L1040.0 82.6 L1041.0 83.3 L1042.0 81.8 L1043.0 82.4 L1044.0 81.8 L1045.0 81.6 L1046.0 82.2 L1047.0 81.7 L1048.0 82.4 L1049.0 82.2 L1050.0 81.2 L1051.0 81.3 L1052.0 81.7 L1053.0 81.4 L1054.0 81.0 L1055.0 82.0 L1056.0 81.6 L1057.0 82.4 L1058.0 82.7 L1059.0 83.0 L1060.0 83.0 L1061.0 83.1 L1062.0 82.7 L1063.0 82.2 L1064.0 81.6 L1065.0 81.2 L1066.0 81.2 L1067.0 81.7 L1068.0 82.3 L1069.0 82.0 L1070.0 83.2 L1071.0 83.2 L1072.0 81.9 L1073.0 81.9 L1074.0 82.3 L1075.0 82.0 L1076.0 82.1 L1077.0 82.1 L1078.0 82.2 L1079.0 82.4 L1080.0 81.9 L1081.0 81.8 L1082.0 82.2 L1083.0 82.4 L1084.0 82.7 L1085.0 82.0 L1086.0 81.5 L1087.0 82.4 L1088.0 81.4 L1089.0 81.1 L1090.0 81.1 L1091.0 82.2 L1092.0 81.7 L1093.0 82.6 L1094.0 82.9 L1095.0 82.4 L1096.0 82.2 L1097.0 82.1 L1098.0 81.7 L1099.0 81.6 L1100.0 81.9 L1101.0 82.5 L1102.0 81.2 L1103.0 81.0 L1104.0 80.8 L1105.0 81.1 L1106.0 82.1 L1107.0 82.1 L1108.0 82.5 L1109.0 81.9 L1110.0 82.1 L1111.0 82.7 L1112.0 81.5 L1113.0 81.5 L1114.0 81.6 L1115.0 82.3 L1116.0 82.5 L1117.0 82.3 L1118.0 81.0 L1119.0 80.9 L1120.0 81.5 L1121.0 80.6 L1122.0 81.3 L1123.0 81.8 L1124.0 81.9 L1125.0 81.5 L1126.0 81.9 L1127.0 81.4 L1128.0 82.1 L1129.0 81.1 L1130.0 81.7 L1131.0 80.8 L1132.0 82.2 L1133.0 82.3 L1134.0 82.3 L1135.0 82.6 L1136.0 82.4 L1137.0 81.6 L1138.0 82.6 L1139.0 81.5 L1140.0 81.6 L1141.0 81.4 L1142.0 82.1 L1143.0 82.2 L1144.0 82.4 L1145.0 82.2 L1146.0 82.5 L1147.0 82.4 L1148.0 81.7 L1149.0 81.9 L1150.0 81.4 L1151.0 81.3 L1152.0 82.0 L1153.0 82.5 L1154.0 82.0 L1155.0 81.7 L1156.0 82.6 L1157.0 81.6 L1158.0 81.0 L1159.0 80.3 L1160.0 80.5 L1161.0 81.3 L1162.0 81.8 L1163.0 81.2 L1164.0 82.6 L1165.0 83.2 L1166.0 81.6 L1167.0 82.5 L1168.0 81.9 L1169.0 81.6 L1170.0 81.5 L1171.0 80.8 L1172.0 81.8 L1173.0 82.0 L1174.0 82.4 L1175.0 81.7 L1176.0 83.1 L1177.0 82.0 L1178.0 82.7 L1179.0 82.6 L1180.0 81.7 L1181.0 82.0 L1182.0 82.3 L1183.0 81.1 L1184.0 80.3 L1185.0 80.6 L1186.0 81.0 L1187.0 80.8 L1188.0 80.9 L1189.0 82.6 L1190.0 82.4 L1191.0 81.2 L1192.0 81.3 L1193.0 82.5 L1194.0 81.6 L1195.0 81.3 L1196.0 81.7 L1197.0 81.3 L1198.0 81.3 L1199.0 81.6 L1200.0 81.6 L1201.0 81.9 L1202.0 80.9 L1203.0 82.0 L1204.0 81.3 L1205.0 81.8 L1206.0 81.7 L1207.0 80.9 L1208.0 82.2 L1209.0 82.2 L1210.0 82.4 L1211.0 82.5 L1212.0 82.1 L1213.0 81.0 L1214.0 80.0 L1215.0 81.2 L1216.0 79.7 L1217.0 80.6 L1218.0 82.2 L1219.0 81.4 L1220.0 82.1 L1221.0 81.9 L1222.0 82.8 L1223.0 82.1 L1224.0 82.1 L1225.0 81.6 L1226.0 81.9 L1227.0 81.6 L1228.0 81.3 L1229.0 82.1 L1230.0 82.4 L1231.0 81.5 L1232.0 82.1 L1233.0 81.9 L1234.0 81.4 L1235.0 81.0 L1236.0 80.8 L1237.0 80.7 L1238.0 80.0 L1239.0 81.5 L1240.0 80.7 L1241.0 81.7 L1242.0 80.8 L1243.0 81.6 L1244.0 82.5 L1245.0 82.3 L1246.0 81.2 L1247.0 81.0 L1248.0 79.5 L1249.0 80.1 L1250.0 79.6 L1251.0 79.3 L1252.0 80.6 L1253.0 81.8" fill="none" stroke="#0c0c0c" stroke-width="1.0" stroke-linejoin="round"/></svg>
<svg style="left:0px;top:282px" width="630" height="36" viewBox="0 282 630 36"><path d="M55.0 310.6 L56.0 311.1 L57.0 310.6 L58.0 310.6 L59.0 310.4 L60.0 310.7 L61.0 310.4 L62.0 310.4 L63.0 311.1 L64.0 311.2 L65.0 310.6 L66.0 310.3 L67.0 311.0 L68.0 310.7 L69.0 310.5 L70.0 310.8 L71.0 310.8 L72.0 310.8 L73.0 310.8 L74.0 310.6 L75.0 310.9 L76.0 310.9 L77.0 310.6 L78.0 311.6 L79.0 311.2 L80.0 311.1 L81.0 311.5 L82.0 311.7 L83.0 311.1 L84.0 311.7 L85.0 311.8 L86.0 311.5 L87.0 311.0 L88.0 311.4 L89.0 310.9 L90.0 310.9 L91.0 310.4 L92.0 311.0 L93.0 310.7 L94.0 311.7 L95.0 311.6 L96.0 311.2 L97.0 311.0 L98.0 311.5 L99.0 311.8 L100.0 311.9 L101.0 311.4 L102.0 311.6 L103.0 310.6 L104.0 310.4 L105.0 311.1 L106.0 311.0 L107.0 310.6 L108.0 311.0 L109.0 311.0 L110.0 311.6 L111.0 311.8 L112.0 311.5 L113.0 310.8 L114.0 311.3 L115.0 311.2 L116.0 311.2 L117.0 311.3 L118.0 311.5 L119.0 311.0 L120.0 311.9 L121.0 312.1 L122.0 311.0 L123.0 311.0 L124.0 310.8 L125.0 311.5 L126.0 310.9 L127.0 311.1 L128.0 312.1 L129.0 311.7 L130.0 311.6 L131.0 311.8 L132.0 311.8 L133.0 311.9 L134.0 311.8 L135.0 311.8 L136.0 312.0 L137.0 311.4 L138.0 311.6 L139.0 311.0 L140.0 311.8 L141.0 310.9 L142.0 311.3 L143.0 311.1 L144.0 311.3 L145.0 311.3 L146.0 311.7 L147.0 312.3 L148.0 311.4 L149.0 312.0 L150.0 311.8 L151.0 311.4 L152.0 311.6 L153.0 311.8 L154.0 311.2 L155.0 311.6 L156.0 312.0 L157.0 312.3 L158.0 311.8 L159.0 312.4 L160.0 312.2 L161.0 312.6 L162.0 312.6 L163.0 312.0 L164.0 311.5 L165.0 312.1 L166.0 311.5 L167.0 311.4 L168.0 311.6 L169.0 311.6 L170.0 312.6 L171.0 311.9 L172.0 311.8 L173.0 312.7 L174.0 312.6 L175.0 312.6 L176.0 312.4 L177.0 312.6 L178.0 312.6 L179.0 312.4 L180.0 313.3 L181.0 313.1 L182.0 312.9 L183.0 312.6 L184.0 312.5 L185.0 311.4 L186.0 311.6 L187.0 312.5 L188.0 312.2 L189.0 312.5 L190.0 312.6 L191.0 312.5 L192.0 312.2 L193.0 312.2 L194.0 312.4 L195.0 312.5 L196.0 312.4 L197.0 312.6 L198.0 312.1 L199.0 311.9 L200.0 312.2 L201.0 312.6 L202.0 312.5 L203.0 312.4 L204.0 312.2 L205.0 312.0 L206.0 312.4 L207.0 312.0 L208.0 312.1 L209.0 312.2 L210.0 312.3 L211.0 312.2 L212.0 312.2 L213.0 312.6 L214.0 312.5 L215.0 312.7 L216.0 312.9 L217.0 312.6 L218.0 312.3 L219.0 312.8 L220.0 312.4 L221.0 312.5 L222.0 312.1 L223.0 312.2 L224.0 312.8 L225.0 312.4 L226.0 312.4 L227.0 312.8 L228.0 312.5 L229.0 312.7 L230.0 312.0 L231.0 312.2 L232.0 312.0 L233.0 312.1 L234.0 312.2 L235.0 312.2 L236.0 312.4 L237.0 313.0 L238.0 312.8 L239.0 313.5 L240.0 313.4 L241.0 312.9 L242.0 313.5 L243.0 313.5 L244.0 313.5 L245.0 312.8 L246.0 313.4 L247.0 313.5 L248.0 312.8 L249.0 313.4 L250.0 312.8 L251.0 312.9 L252.0 312.6 L253.0 312.3 L254.0 312.5 L255.0 312.2 L256.0 312.9 L257.0 312.4 L258.0 312.8 L259.0 312.7 L260.0 313.3 L261.0 312.8 L262.0 312.6 L263.0 313.2 L264.0 313.0 L265.0 312.8 L266.0 312.6 L267.0 313.2 L268.0 313.3 L269.0 313.3 L270.0 313.1 L271.0 312.9 L272.0 313.2 L273.0 313.2 L274.0 313.1 L275.0 313.1 L276.0 313.1 L277.0 313.4 L278.0 313.1 L279.0 312.8 L280.0 313.2 L281.0 313.0 L282.0 313.4 L283.0 313.0 L284.0 313.0 L285.0 313.1 L286.0 313.2 L287.0 313.2 L288.0 313.0 L289.0 312.8 L290.0 313.3 L291.0 313.4 L292.0 312.9 L293.0 312.8 L294.0 313.1 L295.0 313.1 L296.0 312.9 L297.0 313.3 L298.0 313.1 L299.0 313.1 L300.0 312.9 L301.0 313.1 L302.0 313.2 L303.0 312.9 L304.0 312.7 L305.0 313.2 L306.0 312.9 L307.0 313.1 L308.0 312.7 L309.0 312.9 L310.0 313.1 L311.0 313.1 L312.0 313.3 L313.0 313.0 L314.0 313.0 L315.0 313.2 L316.0 313.1 L317.0 313.1 L318.0 312.7 L319.0 313.1 L320.0 312.5 L321.0 312.9 L322.0 312.9 L323.0 313.0 L324.0 312.8 L325.0 312.9 L326.0 313.1 L327.0 313.2 L328.0 313.2 L329.0 313.2 L330.0 313.5 L331.0 313.2 L332.0 313.0 L333.0 313.2 L334.0 313.2 L335.0 313.2 L336.0 312.8 L337.0 312.8 L338.0 312.6 L339.0 312.7 L340.0 313.1 L341.0 313.1 L342.0 313.1 L343.0 313.2 L344.0 312.8 L345.0 312.7 L346.0 312.7 L347.0 313.2 L348.0 312.8 L349.0 313.3 L350.0 313.2 L351.0 313.0 L352.0 313.4 L353.0 313.4 L354.0 312.9 L355.0 313.2 L356.0 313.2 L357.0 313.2 L358.0 313.2 L359.0 313.8 L360.0 313.6 L361.0 313.4 L362.0 313.3 L363.0 313.4 L364.0 313.0 L365.0 312.7 L366.0 313.1 L367.0 313.0 L368.0 313.4 L369.0 313.3 L370.0 313.1 L371.0 313.5 L372.0 313.0 L373.0 313.0 L374.0 313.7 L375.0 313.1 L376.0 313.5 L377.0 313.3 L378.0 313.3 L379.0 313.7 L380.0 313.4 L381.0 313.4 L382.0 313.2 L383.0 313.4 L384.0 312.9 L385.0 312.7 L386.0 312.9 L387.0 313.0 L388.0 313.2 L389.0 312.9 L390.0 313.0 L391.0 312.8 L392.0 313.0 L393.0 313.3 L394.0 313.7 L395.0 313.5 L396.0 313.4 L397.0 313.6 L398.0 313.0 L399.0 313.0 L400.0 313.3 L401.0 312.8 L402.0 313.4 L403.0 313.4 L404.0 313.2 L405.0 313.3 L406.0 313.3 L407.0 313.3 L408.0 313.5 L409.0 313.6 L410.0 313.7 L411.0 313.8 L412.0 313.3 L413.0 313.3 L414.0 313.4 L415.0 313.3 L416.0 313.5 L417.0 313.5 L418.0 313.3 L419.0 312.9 L420.0 313.4 L421.0 313.1 L422.0 313.2 L423.0 312.9 L424.0 313.1 L425.0 313.1 L426.0 313.1 L427.0 313.2 L428.0 313.2 L429.0 313.7 L430.0 313.4 L431.0 313.8 L432.0 313.6 L433.0 313.6 L434.0 313.5 L435.0 313.0 L436.0 313.1 L437.0 313.6 L438.0 313.7 L439.0 313.6 L440.0 313.4 L441.0 313.3 L442.0 313.3 L443.0 313.2 L444.0 313.4 L445.0 313.2 L446.0 313.4 L447.0 313.2 L448.0 313.3 L449.0 313.4 L450.0 313.2 L451.0 312.2 L452.0 313.1 L453.0 311.2 L454.0 310.4 L455.0 309.8 L456.0 311.1 L457.0 310.4 L458.0 310.0 L459.0 309.5 L460.0 307.9 L461.0 308.8 L462.0 310.4 L463.0 307.6 L464.0 309.3 L465.0 308.4 L466.0 307.6 L467.0 311.6 L468.0 306.8 L469.0 307.3 L470.0 308.2 L471.0 307.9 L472.0 308.3 L473.0 310.3 L474.0 307.9 L475.0 301.0 L476.0 298.4 L477.0 306.1 L478.0 307.6 L479.0 306.8 L480.0 303.9 L481.0 304.4 L482.0 309.8 L483.0 304.9 L484.0 306.1 L485.0 310.2 L486.0 308.0 L487.0 309.0 L488.0 310.3 L489.0 307.0 L490.0 304.1 L491.0 308.6 L492.0 304.5 L493.0 305.8 L494.0 309.9 L495.0 304.6 L496.0 306.4 L497.0 304.0 L498.0 305.5 L499.0 305.3 L500.0 308.2 L501.0 304.7 L502.0 303.7 L503.0 304.0 L504.0 307.2 L505.0 304.6 L506.0 306.7 L507.0 309.6 L508.0 310.2 L509.0 309.9 L510.0 309.0 L511.0 309.2 L512.0 306.5 L513.0 304.8 L514.0 306.1 L515.0 307.0 L516.0 305.0 L517.0 307.6 L518.0 306.0 L519.0 303.3 L520.0 306.2 L521.0 308.1 L522.0 301.9 L523.0 303.5 L524.0 306.7 L525.0 306.6 L526.0 305.1 L527.0 304.3 L528.0 307.5 L529.0 309.3 L530.0 307.3 L531.0 301.8 L532.0 307.7 L533.0 304.6 L534.0 307.1 L535.0 306.8 L536.0 307.2 L537.0 304.8 L538.0 307.3 L539.0 308.8 L540.0 307.9 L541.0 307.2 L542.0 303.4 L543.0 308.2 L544.0 308.6 L545.0 303.4 L546.0 303.8 L547.0 300.0 L548.0 307.9 L549.0 303.4 L550.0 303.3 L551.0 307.8 L552.0 295.0 L553.0 304.7 L554.0 306.1 L555.0 300.5 L556.0 304.6 L557.0 297.7 L558.0 301.5 L559.0 304.5 L560.0 305.4 L561.0 294.7 L562.0 301.4 L563.0 292.9 L564.0 297.8 L565.0 289.7 L566.0 299.9 L567.0 300.4 L568.0 299.7 L569.0 290.3 L570.0 293.0 L571.0 297.4 L572.0 301.1 L573.0 290.8 L574.0 285.6 L575.0 291.5 L576.0 301.0 L577.0 300.4 L578.0 299.2 L579.0 297.7 L580.0 299.7 L581.0 299.4 L582.0 289.6 L583.0 285.6 L584.0 297.2 L585.0 284.5 L586.0 292.7 L587.0 287.2 L588.0 285.2 L589.0 284.8 L590.0 299.8 L591.0 295.4 L592.0 290.7 L593.0 285.3 L594.0 299.7 L595.0 296.4 L596.0 287.2 L597.0 299.4 L598.0 294.9 L599.0 295.8 L600.0 290.1 L601.0 286.0 L602.0 298.3 L603.0 288.6 L604.0 288.5 L605.0 291.7 L606.0 299.9 L607.0 300.8 L608.0 309.3 L609.0 312.3 L610.0 315.7 L611.0 315.5 L612.0 315.6 L613.0 315.7 L614.0 315.7 L615.0 315.5 L616.0 315.6 L617.0 315.5 L618.0 315.7 L619.0 315.6 L620.0 315.7 L621.0 315.5 L622.0 315.8 L623.0 315.6 L624.0 310.0 L625.0 304.7 L626.0 310.8 L627.0 315.7 L628.0 315.5 L629.0 315.6 L630.0 315.6" fill="none" stroke="#0c0c0c" stroke-width="1.0" stroke-linejoin="round"/></svg>
<svg style="left:634px;top:282px" width="634" height="36" viewBox="634 282 634 36"><path d="M635.0 315.6 L636.0 315.6 L637.0 315.6 L638.0 306.9 L639.0 307.3 L640.0 313.7 L641.0 312.4 L642.0 309.3 L643.0 312.7 L644.0 315.3 L645.0 315.7 L646.0 315.4 L647.0 315.5 L648.0 315.5 L649.0 315.5 L650.0 315.6 L651.0 315.8 L652.0 315.7 L653.0 307.5 L654.0 291.6 L655.0 283.7 L656.0 283.9 L657.0 283.7 L658.0 283.7 L659.0 283.7 L660.0 283.7 L661.0 283.8 L662.0 283.7 L663.0 283.7 L664.0 288.1 L665.0 284.9 L666.0 284.9 L667.0 295.6 L668.0 285.3 L669.0 285.7 L670.0 289.8 L671.0 298.5 L672.0 287.5 L673.0 298.6 L674.0 287.1 L675.0 291.9 L676.0 301.5 L677.0 300.6 L678.0 294.1 L679.0 295.7 L680.0 293.3 L681.0 290.6 L682.0 302.5 L683.0 306.1 L684.0 291.4 L685.0 306.3 L686.0 292.8 L687.0 305.3 L688.0 294.7 L689.0 295.5 L690.0 294.4 L691.0 299.8 L692.0 295.1 L693.0 305.9 L694.0 299.0 L695.0 304.5 L696.0 296.3 L697.0 298.5 L698.0 303.3 L699.0 302.8 L700.0 310.5 L701.0 310.5 L702.0 302.8 L703.0 304.5 L704.0 299.8 L705.0 303.6 L706.0 309.8 L707.0 307.0 L708.0 302.3 L709.0 305.4 L710.0 311.3 L711.0 302.7 L712.0 303.3 L713.0 311.1 L714.0 307.0 L715.0 308.8 L716.0 306.1 L717.0 310.7 L718.0 311.8 L719.0 310.8 L720.0 309.0 L721.0 314.0 L722.0 314.3 L723.0 312.7 L724.0 312.2 L725.0 313.3 L726.0 313.7 L727.0 313.3 L728.0 313.9 L729.0 314.9 L730.0 314.5 L731.0 314.9 L732.0 314.8 L733.0 314.4 L734.0 314.7 L735.0 314.5 L736.0 314.8 L737.0 314.4 L738.0 314.7 L739.0 314.7 L740.0 314.5 L741.0 314.6 L742.0 314.4 L743.0 314.2 L744.0 314.3 L745.0 314.7 L746.0 314.5 L747.0 314.4 L748.0 314.4 L749.0 314.3 L750.0 314.4 L751.0 314.6 L752.0 314.5 L753.0 314.2 L754.0 314.5 L755.0 314.2 L756.0 314.2 L757.0 314.5 L758.0 314.6 L759.0 314.8 L760.0 315.0 L761.0 314.6 L762.0 314.8 L763.0 314.5 L764.0 314.7 L765.0 314.4 L766.0 314.4 L767.0 314.5 L768.0 314.6 L769.0 314.8 L770.0 314.4 L771.0 314.7 L772.0 314.5 L773.0 314.8 L774.0 314.9 L775.0 314.9 L776.0 314.5 L777.0 314.9 L778.0 314.6 L779.0 314.9 L780.0 314.8 L781.0 315.0 L782.0 314.8 L783.0 315.0 L784.0 314.8 L785.0 314.5 L786.0 314.9 L787.0 314.7 L788.0 315.0 L789.0 315.0 L790.0 315.2 L791.0 315.2 L792.0 314.6 L793.0 314.5 L794.0 314.4 L795.0 314.4 L796.0 314.3 L797.0 314.8 L798.0 314.6 L799.0 314.6 L800.0 314.6 L801.0 314.4 L802.0 314.5 L803.0 314.5 L804.0 314.9 L805.0 314.7 L806.0 314.7 L807.0 314.7 L808.0 314.8 L809.0 314.7 L810.0 315.0 L811.0 314.6 L812.0 314.8 L813.0 314.6 L814.0 314.4 L815.0 314.5 L816.0 314.7 L817.0 314.8 L818.0 314.8 L819.0 314.7 L820.0 314.5 L821.0 314.5 L822.0 314.7 L823.0 314.7 L824.0 314.4 L825.0 314.7 L826.0 314.6 L827.0 314.8 L828.0 314.7 L829.0 314.5 L830.0 314.5 L831.0 314.5 L832.0 314.7 L833.0 314.4 L834.0 314.7 L835.0 314.9 L836.0 315.0 L837.0 314.5 L838.0 314.5 L839.0 314.6 L840.0 314.7 L841.0 314.9 L842.0 315.0 L843.0 314.8 L844.0 314.8 L845.0 314.4 L846.0 314.5 L847.0 314.6 L848.0 314.9 L849.0 314.9 L850.0 314.9 L851.0 314.5 L852.0 315.0 L853.0 314.7 L854.0 314.8 L855.0 314.9 L856.0 314.6 L857.0 315.0 L858.0 314.8 L859.0 315.0 L860.0 315.0 L861.0 315.1 L862.0 314.8 L863.0 314.8 L864.0 314.8 L865.0 314.2 L866.0 314.7 L867.0 314.5 L868.0 314.7 L869.0 314.8 L870.0 314.9 L871.0 314.7 L872.0 314.7 L873.0 314.8 L874.0 314.9 L875.0 314.8 L876.0 314.8 L877.0 314.8 L878.0 314.7 L879.0 314.8 L880.0 314.4 L881.0 314.6 L882.0 314.9 L883.0 314.9 L884.0 314.6 L885.0 314.9 L886.0 314.8 L887.0 314.6 L888.0 314.5 L889.0 314.8 L890.0 314.7 L891.0 314.7 L892.0 314.9 L893.0 314.4 L894.0 315.0 L895.0 314.4 L896.0 314.9 L897.0 314.9 L898.0 314.5 L899.0 314.5 L900.0 314.9 L901.0 314.7 L902.0 314.6 L903.0 314.4 L904.0 314.6 L905.0 314.1 L906.0 314.1 L907.0 314.4 L908.0 314.4 L909.0 314.5 L910.0 314.9 L911.0 314.6 L912.0 314.6 L913.0 314.7 L914.0 314.9 L915.0 314.6 L916.0 314.4 L917.0 314.8 L918.0 314.7 L919.0 314.5 L920.0 314.7 L921.0 315.1 L922.0 314.6 L923.0 314.8 L924.0 314.3 L925.0 314.4 L926.0 314.7 L927.0 314.4 L928.0 314.6 L929.0 314.8 L930.0 314.5 L931.0 314.5 L932.0 314.5 L933.0 314.5 L934.0 314.6 L935.0 314.6 L936.0 314.6 L937.0 314.6 L938.0 314.2 L939.0 314.6 L940.0 314.7 L941.0 314.3 L942.0 314.5 L943.0 314.6 L944.0 314.6 L945.0 314.9 L946.0 314.9 L947.0 314.9 L948.0 314.4 L949.0 314.3 L950.0 314.4 L951.0 314.8 L952.0 314.1 L953.0 314.2 L954.0 314.3 L955.0 314.6 L956.0 314.1 L957.0 314.4 L958.0 314.6 L959.0 315.1 L960.0 314.7 L961.0 315.1 L962.0 314.8 L963.0 315.1 L964.0 314.9 L965.0 314.6 L966.0 314.7 L967.0 314.6 L968.0 314.9 L969.0 314.8 L970.0 314.7 L971.0 315.0 L972.0 314.7 L973.0 314.2 L974.0 314.2 L975.0 314.1 L976.0 314.5 L977.0 314.3 L978.0 314.2 L979.0 314.3 L980.0 314.5 L981.0 314.7 L982.0 314.9 L983.0 314.4 L984.0 314.4 L985.0 314.9 L986.0 314.5 L987.0 314.7 L988.0 314.6 L989.0 314.4 L990.0 314.8 L991.0 314.6 L992.0 314.8 L993.0 314.7 L994.0 315.0 L995.0 314.9 L996.0 314.9 L997.0 314.4 L998.0 314.9 L999.0 314.4 L1000.0 314.8 L1001.0 314.2 L1002.0 314.8 L1003.0 315.0 L1004.0 315.0 L1005.0 314.5 L1006.0 314.6 L1007.0 314.3 L1008.0 314.5 L1009.0 314.6 L1010.0 314.4 L1011.0 314.3 L1012.0 313.9 L1013.0 314.4 L1014.0 314.3 L1015.0 313.9 L1016.0 314.4 L1017.0 313.7 L1018.0 314.2 L1019.0 314.0 L1020.0 313.9 L1021.0 313.7 L1022.0 314.4 L1023.0 313.9 L1024.0 314.4 L1025.0 314.0 L1026.0 314.5 L1027.0 313.9 L1028.0 314.3 L1029.0 314.2 L1030.0 314.3 L1031.0 314.1 L1032.0 314.3 L1033.0 314.0 L1034.0 314.5 L1035.0 314.7 L1036.0 314.2 L1037.0 314.8 L1038.0 314.7 L1039.0 314.1 L1040.0 314.0 L1041.0 314.2 L1042.0 313.8 L1043.0 314.3 L1044.0 313.6 L1045.0 313.7 L1046.0 313.7 L1047.0 313.6 L1048.0 314.2 L1049.0 314.2 L1050.0 314.2 L1051.0 314.0 L1052.0 314.0 L1053.0 314.1 L1054.0 314.3 L1055.0 314.0 L1056.0 313.9 L1057.0 313.8 L1058.0 314.2 L1059.0 314.0 L1060.0 313.9 L1061.0 313.9 L1062.0 313.7 L1063.0 314.1 L1064.0 313.8 L1065.0 314.1 L1066.0 314.0 L1067.0 313.7 L1068.0 313.5 L1069.0 314.0 L1070.0 313.9 L1071.0 313.4 L1072.0 314.1 L1073.0 314.4 L1074.0 314.3 L1075.0 313.9 L1076.0 313.9 L1077.0 313.8 L1078.0 314.2 L1079.0 314.5 L1080.0 314.3 L1081.0 314.0 L1082.0 314.2 L1083.0 314.3 L1084.0 314.1 L1085.0 314.0 L1086.0 314.1 L1087.0 314.0 L1088.0 314.4 L1089.0 314.5 L1090.0 313.9 L1091.0 313.9 L1092.0 314.1 L1093.0 314.3 L1094.0 314.1 L1095.0 313.9 L1096.0 313.6 L1097.0 313.8 L1098.0 313.2 L1099.0 313.4 L1100.0 313.7 L1101.0 313.4 L1102.0 313.5 L1103.0 313.6 L1104.0 313.7 L1105.0 314.3 L1106.0 314.0 L1107.0 313.7 L1108.0 314.3 L1109.0 314.5 L1110.0 314.4 L1111.0 314.3 L1112.0 314.1 L1113.0 314.2 L1114.0 313.9 L1115.0 314.3 L1116.0 314.2 L1117.0 313.9 L1118.0 313.9 L1119.0 313.6 L1120.0 313.6 L1121.0 314.1 L1122.0 313.9 L1123.0 313.5 L1124.0 313.4 L1125.0 313.5 L1126.0 313.1 L1127.0 313.7 L1128.0 313.6 L1129.0 314.0 L1130.0 313.4 L1131.0 313.6 L1132.0 313.3 L1133.0 314.0 L1134.0 313.5 L1135.0 313.6 L1136.0 314.1 L1137.0 313.5 L1138.0 313.5 L1139.0 314.2 L1140.0 313.5 L1141.0 313.5 L1142.0 313.5 L1143.0 313.3 L1144.0 313.3 L1145.0 313.4 L1146.0 313.1 L1147.0 312.9 L1148.0 313.6 L1149.0 313.5 L1150.0 313.7 L1151.0 313.3 L1152.0 313.2 L1153.0 313.3 L1154.0 313.8 L1155.0 313.7 L1156.0 314.1 L1157.0 313.6 L1158.0 313.4 L1159.0 313.4 L1160.0 314.1 L1161.0 313.8 L1162.0 314.1 L1163.0 313.8 L1164.0 313.4 L1165.0 313.9 L1166.0 313.4 L1167.0 313.3 L1168.0 313.3 L1169.0 313.8 L1170.0 313.2 L1171.0 313.2 L1172.0 313.0 L1173.0 313.7 L1174.0 313.6 L1175.0 313.3 L1176.0 313.1 L1177.0 313.3 L1178.0 313.7 L1179.0 313.4 L1180.0 313.4 L1181.0 313.4 L1182.0 313.5 L1183.0 313.5 L1184.0 313.4 L1185.0 314.0 L1186.0 313.6 L1187.0 313.8 L1188.0 313.7 L1189.0 313.0 L1190.0 313.3 L1191.0 313.3 L1192.0 313.4 L1193.0 313.2 L1194.0 313.7 L1195.0 313.2 L1196.0 313.6 L1197.0 312.7 L1198.0 313.2 L1199.0 312.5 L1200.0 312.6 L1201.0 312.8 L1202.0 313.1 L1203.0 313.2 L1204.0 313.1 L1205.0 313.4 L1206.0 313.3 L1207.0 313.5 L1208.0 313.0 L1209.0 313.3 L1210.0 313.0 L1211.0 312.8 L1212.0 312.9 L1213.0 312.8 L1214.0 312.7 L1215.0 313.0 L1216.0 312.4 L1217.0 312.7 L1218.0 312.8 L1219.0 312.6 L1220.0 313.1 L1221.0 313.2 L1222.0 313.1 L1223.0 312.9 L1224.0 312.8 L1225.0 312.7 L1226.0 312.9 L1227.0 312.7 L1228.0 313.0 L1229.0 313.1 L1230.0 312.9 L1231.0 313.2 L1232.0 312.8 L1233.0 312.9 L1234.0 313.4 L1235.0 312.9 L1236.0 313.5 L1237.0 313.5 L1238.0 312.7 L1239.0 313.5 L1240.0 313.5 L1241.0 312.8 L1242.0 313.6 L1243.0 313.2 L1244.0 313.3 L1245.0 313.7 L1246.0 313.6 L1247.0 312.9 L1248.0 313.3 L1249.0 313.3 L1250.0 313.1 L1251.0 312.9 L1252.0 313.3 L1253.0 313.5 L1254.0 312.9 L1255.0 313.6 L1256.0 313.6 L1257.0 313.5 L1258.0 312.4 L1259.0 312.8 L1260.0 312.4 L1261.0 312.6 L1262.0 312.2 L1263.0 312.8 L1264.0 312.8 L1265.0 312.5 L1266.0 313.2 L1267.0 312.9 L1268.0 312.7" fill="none" stroke="#0c0c0c" stroke-width="1.0" stroke-linejoin="round"/></svg>
<div style="left:0px;top:103.5px;width:630px;height:161.2px;background:#0a1680;"></div>
<div style="left:634px;top:103.5px;width:633.7px;height:161.2px;background:#0a1680;"></div>
<div style="left:0px;top:334px;width:630px;height:160.5px;background:#0a1680;"></div>
<div style="left:634px;top:334px;width:633.7px;height:160.5px;background:#0a1680;"></div>
<svg style="left:11px;top:103.8px" width="619" height="161" viewBox="11 103.8 619 161">
<defs><filter id="f1" filterUnits="userSpaceOnUse" x="11" y="103.8" width="619" height="161" color-interpolation-filters="sRGB">
<feTurbulence type="fractalNoise" baseFrequency="0.6 0.55" numOctaves="3" seed="3" result="t"/>
<feColorMatrix in="t" type="matrix" values="1 0 0 0 0 1 0 0 0 0 1 0 0 0 0 0 0 0 0 1" result="n0"/>
<feComponentTransfer in="n0" result="n"><feFuncR type="linear" slope="2.6" intercept="-0.8"/><feFuncG type="linear" slope="2.6" intercept="-0.8"/><feFuncB type="linear" slope="2.6" intercept="-0.8"/></feComponentTransfer>
<feColorMatrix in="SourceGraphic" type="matrix" values="1 0 0 0 0 1 0 0 0 0 1 0 0 0 0 0 0 0 0 1" result="I"/>
<feColorMatrix in="SourceGraphic" type="matrix" values="0 1 0 0 0 0 1 0 0 0 0 1 0 0 0 0 0 0 0 1" result="A"/>
<feComposite in="I" in2="A" operator="arithmetic" k1="1" k2="0" k3="0" k4="0" result="P"/>
<feComposite in="P" in2="n" operator="arithmetic" k1="1.8" k2="0" k3="0" k4="0" result="Q"/>
<feComposite in="I" in2="P" operator="arithmetic" k1="0" k2="1" k3="-0.9" k4="0" result="T"/>
<feComposite in="T" in2="Q" operator="arithmetic" k1="0" k2="1" k3="1" k4="0" result="R0"/>
<feGaussianBlur in="R0" stdDeviation="0.6" result="R"/>
<feComponentTransfer in="R"><feFuncR type="table" tableValues="0.000 0.133 0.267 0.412 0.561 0.690 0.784 0.894 0.973 1.000 1.000"/><feFuncG type="table" tableValues="0.000 0.012 0.039 0.086 0.149 0.251 0.361 0.510 0.706 0.902 1.000"/><feFuncB type="table" tableValues="0.000 0.008 0.016 0.031 0.051 0.086 0.118 0.125 0.086 0.039 0.094"/></feComponentTransfer>
</filter><linearGradient id="g1" gradientUnits="userSpaceOnUse" x1="11" y1="0" x2="630" y2="0"><stop offset="0.0000" stop-color="rgb(143,51,0)"/><stop offset="0.0630" stop-color="rgb(138,51,0)"/><stop offset="0.1438" stop-color="rgb(125,46,0)"/><stop offset="0.2246" stop-color="rgb(112,43,0)"/><stop offset="0.3053" stop-color="rgb(99,38,0)"/><stop offset="0.3861" stop-color="rgb(79,33,0)"/><stop offset="0.4669" stop-color="rgb(56,33,0)"/><stop offset="0.5477" stop-color="rgb(41,43,0)"/><stop offset="0.6284" stop-color="rgb(33,51,0)"/><stop offset="0.6850" stop-color="rgb(41,92,0)"/><stop offset="0.7173" stop-color="rgb(54,92,0)"/><stop offset="0.7496" stop-color="rgb(66,92,0)"/><stop offset="0.7900" stop-color="rgb(79,92,0)"/><stop offset="0.8142" stop-color="rgb(97,92,0)"/><stop offset="0.8336" stop-color="rgb(117,92,0)"/><stop offset="0.8546" stop-color="rgb(163,92,0)"/><stop offset="0.8772" stop-color="rgb(199,92,0)"/><stop offset="0.8950" stop-color="rgb(235,115,0)"/><stop offset="0.9111" stop-color="rgb(255,128,0)"/><stop offset="0.9354" stop-color="rgb(255,102,0)"/><stop offset="1.0000" stop-color="rgb(255,26,0)"/></linearGradient></defs>
<g filter="url(#f1)"><rect x="11" y="103.8" width="619" height="161" fill="url(#g1)"/><defs><filter id="sb" x="-20%" y="-20%" width="140%" height="140%"><feGaussianBlur stdDeviation="4"/></filter><filter id="sbl" x="-30%" y="-30%" width="160%" height="160%"><feGaussianBlur stdDeviation="0.9"/></filter></defs><g filter="url(#sb)" fill="#000"><path d="M535 95 L584 95 L580 122 L568 146 L540 142 Z" opacity=".38"/><path d="M540 232 L566 228 L578 243 L578 272 L540 272 Z" opacity=".3"/><path d="M440 190 L500 185 L520 215 L440 215 Z" opacity=".25"/></g><defs><linearGradient id="bf1" gradientUnits="userSpaceOnUse" x1="11" x2="470" y1="0" y2="0"><stop offset="0" stop-color="#000" stop-opacity=".33"/><stop offset=".75" stop-color="#000" stop-opacity=".33"/><stop offset="1" stop-color="#000" stop-opacity="0"/></linearGradient></defs><rect x="11" y="162" width="459" height="16.5" fill="url(#bf1)"/><rect x="11" y="214" width="459" height="6" fill="url(#bf1)"/><path d="M415 218 L575 217.2 Q588 218.5 593 221.5 Q586 225.5 570 226 L415 226 Z" fill="rgb(10,76,0)" opacity=".92"/><path d="M425 251.5 L565 251 Q578 252.5 583 255.5 Q576 259 560 259.6 L425 259.6 Z" fill="rgb(10,76,0)" opacity=".9"/><path d="M380 219 H430 V225.5 H380 Z" fill="rgb(8,76,0)" opacity=".5"/><path d="M390 252 H430 V259 H390 Z" fill="rgb(8,76,0)" opacity=".5"/><g stroke="rgb(15,102,0)" stroke-linecap="round" fill="none" opacity=".7" filter="url(#sbl)"><path d="M472 126 L499 150" stroke-width="5"/><path d="M517 105 L529 121" stroke-width="4"/><path d="M529 121 L536 134" stroke-width="1.6"/><path d="M484 197 L494 216" stroke-width="3.5"/><path d="M511 199 L502 217" stroke-width="3.5"/><path d="M461 202 L468 217" stroke-width="3"/><path d="M566 127 H577" stroke-width="3"/><path d="M562 135 H572" stroke-width="3"/><path d="M520 165 H535" stroke-width="2"/><path d="M540 183 L575 200" stroke-width="1.5"/></g><g stroke="rgb(242,76,0)" stroke-linecap="round" fill="none" opacity=".8"><path d="M473 174 L474.5 186" stroke-width="1.2"/><path d="M440 201 L445 203" stroke-width="1.5"/><path d="M419 232 Q423 236 427 232" stroke-width="1.2"/><path d="M497 196 L503 212" stroke-width="1.2"/></g><path d="M596.5 103 Q592 125 588.8 150 Q588.5 175 590.5 195 Q592.5 208 595 217 Q606 218.5 613 221.8 Q606 225 596.5 226.5 Q597 245 596.5 265 L630 265 L630 103 Z" fill="rgb(0,0,0)"/></g><rect x="621.3" y="103" width="1.5" height="162" fill="#4c1e10"/></svg>
<svg style="left:634px;top:103.8px" width="620" height="161" viewBox="634 103.8 620 161">
<defs><filter id="f2" filterUnits="userSpaceOnUse" x="634" y="103.8" width="620" height="161" color-interpolation-filters="sRGB">
<feTurbulence type="fractalNoise" baseFrequency="0.6 0.55" numOctaves="3" seed="11" result="t"/>
<feColorMatrix in="t" type="matrix" values="1 0 0 0 0 1 0 0 0 0 1 0 0 0 0 0 0 0 0 1" result="n0"/>
<feComponentTransfer in="n0" result="n"><feFuncR type="linear" slope="2.6" intercept="-0.8"/><feFuncG type="linear" slope="2.6" intercept="-0.8"/><feFuncB type="linear" slope="2.6" intercept="-0.8"/></feComponentTransfer>
<feColorMatrix in="SourceGraphic" type="matrix" values="1 0 0 0 0 1 0 0 0 0 1 0 0 0 0 0 0 0 0 1" result="I"/>
<feColorMatrix in="SourceGraphic" type="matrix" values="0 1 0 0 0 0 1 0 0 0 0 1 0 0 0 0 0 0 0 1" result="A"/>
<feComposite in="I" in2="A" operator="arithmetic" k1="1" k2="0" k3="0" k4="0" result="P"/>
<feComposite in="P" in2="n" operator="arithmetic" k1="1.8" k2="0" k3="0" k4="0" result="Q"/>
<feComposite in="I" in2="P" operator="arithmetic" k1="0" k2="1" k3="-0.9" k4="0" result="T"/>
<feComposite in="T" in2="Q" operator="arithmetic" k1="0" k2="1" k3="1" k4="0" result="R0"/>
<feGaussianBlur in="R0" stdDeviation="0.6" result="R"/>
<feComponentTransfer in="R"><feFuncR type="table" tableValues="0.000 0.133 0.267 0.412 0.561 0.690 0.784 0.894 0.973 1.000 1.000"/><feFuncG type="table" tableValues="0.000 0.012 0.039 0.086 0.149 0.251 0.361 0.510 0.706 0.902 1.000"/><feFuncB type="table" tableValues="0.000 0.008 0.016 0.031 0.051 0.086 0.118 0.125 0.086 0.039 0.094"/></feComponentTransfer>
</filter><linearGradient id="g2" gradientUnits="userSpaceOnUse" x1="634" y1="0" x2="1254" y2="0"><stop offset="0.0000" stop-color="rgb(255,26,0)"/><stop offset="0.0516" stop-color="rgb(255,102,0)"/><stop offset="0.0629" stop-color="rgb(247,128,0)"/><stop offset="0.0742" stop-color="rgb(204,92,0)"/><stop offset="0.0903" stop-color="rgb(173,92,0)"/><stop offset="0.1065" stop-color="rgb(153,92,0)"/><stop offset="0.1306" stop-color="rgb(128,92,0)"/><stop offset="0.1629" stop-color="rgb(102,92,0)"/><stop offset="0.1871" stop-color="rgb(69,92,0)"/><stop offset="0.2032" stop-color="rgb(26,92,0)"/><stop offset="0.2226" stop-color="rgb(18,51,0)"/><stop offset="0.2839" stop-color="rgb(23,43,0)"/><stop offset="0.3484" stop-color="rgb(36,38,0)"/><stop offset="0.4774" stop-color="rgb(61,33,0)"/><stop offset="0.6065" stop-color="rgb(82,33,0)"/><stop offset="0.7355" stop-color="rgb(102,38,0)"/><stop offset="0.8645" stop-color="rgb(120,43,0)"/><stop offset="0.9452" stop-color="rgb(133,51,0)"/><stop offset="1.0000" stop-color="rgb(143,51,0)"/></linearGradient></defs>
<g filter="url(#f2)"><rect x="634" y="103.8" width="620" height="161" fill="url(#g2)"/><defs><linearGradient id="bf2" gradientUnits="userSpaceOnUse" x1="760" x2="1254" y1="0" y2="0"><stop offset="0.1" stop-color="#000" stop-opacity="0"/><stop offset=".4" stop-color="#000" stop-opacity=".33"/><stop offset="1" stop-color="#000" stop-opacity=".33"/></linearGradient></defs><rect x="760" y="162" width="494" height="16.5" fill="url(#bf2)"/><rect x="760" y="214" width="494" height="6" fill="url(#bf2)"/><path d="M770 191 Q745 200 737 215 Q722 240 716 265 L775 265 Z" fill="rgb(26,128,0)" opacity=".9"/><path d="M735 193 L771 191.5 L740 199 Z" fill="rgb(204,204,0)" opacity=".8"/><path d="M737 213 Q723 238 716 265" stroke="rgb(242,102,0)" stroke-width="2" fill="none" opacity=".95"/><g stroke="rgb(26,102,0)" stroke-linecap="round" fill="none" opacity=".7" filter="url(#sbl)"><path d="M690 155 H702" stroke-width="2.5"/><path d="M688 186 L712 196" stroke-width="3"/><path d="M676 212 H688" stroke-width="1.5"/><path d="M700 225 L715 232" stroke-width="2"/></g><path d="M634 103 L665.5 103 Q666 130 669 155 Q669.5 175 667 195 Q665 205 665 212 L660 212.5 L665 213.5 Q664 240 666 265 L634 265 Z" fill="rgb(0,0,0)"/></g><rect x="641.8" y="103" width="1.5" height="162" fill="#5e2616"/><rect x="648.3" y="103" width="1.6" height="162" fill="#6a2a16"/></svg>
<svg style="left:55.5px;top:334px" width="574.5" height="160.6" viewBox="55.5 334 574.5 160.6">
<defs><filter id="f3" filterUnits="userSpaceOnUse" x="55.5" y="334" width="574.5" height="160.6" color-interpolation-filters="sRGB">
<feTurbulence type="fractalNoise" baseFrequency="0.6 0.8" numOctaves="3" seed="23" result="t"/>
<feColorMatrix in="t" type="matrix" values="1 0 0 0 0 1 0 0 0 0 1 0 0 0 0 0 0 0 0 1" result="n0"/>
<feComponentTransfer in="n0" result="n"><feFuncR type="linear" slope="2.6" intercept="-0.8"/><feFuncG type="linear" slope="2.6" intercept="-0.8"/><feFuncB type="linear" slope="2.6" intercept="-0.8"/></feComponentTransfer>
<feColorMatrix in="SourceGraphic" type="matrix" values="1 0 0 0 0 1 0 0 0 0 1 0 0 0 0 0 0 0 0 1" result="I"/>
<feColorMatrix in="SourceGraphic" type="matrix" values="0 1 0 0 0 0 1 0 0 0 0 1 0 0 0 0 0 0 0 1" result="A"/>
<feComposite in="I" in2="A" operator="arithmetic" k1="1" k2="0" k3="0" k4="0" result="P"/>
<feComposite in="P" in2="n" operator="arithmetic" k1="1.8" k2="0" k3="0" k4="0" result="Q"/>
<feComposite in="I" in2="P" operator="arithmetic" k1="0" k2="1" k3="-0.9" k4="0" result="T"/>
<feComposite in="T" in2="Q" operator="arithmetic" k1="0" k2="1" k3="1" k4="0" result="R0"/>
<feGaussianBlur in="R0" stdDeviation="0.6" result="R"/>
<feComponentTransfer in="R"><feFuncR type="table" tableValues="0.000 0.133 0.267 0.412 0.561 0.690 0.784 0.894 0.973 1.000 1.000"/><feFuncG type="table" tableValues="0.000 0.012 0.039 0.086 0.149 0.251 0.361 0.510 0.706 0.902 1.000"/><feFuncB type="table" tableValues="0.000 0.008 0.016 0.031 0.051 0.086 0.118 0.125 0.086 0.039 0.094"/></feComponentTransfer>
</filter><linearGradient id="g3" gradientUnits="userSpaceOnUse" x1="55.5" y1="0" x2="630.0" y2="0"><stop offset="0.0000" stop-color="rgb(122,51,0)"/><stop offset="0.0775" stop-color="rgb(110,51,0)"/><stop offset="0.1645" stop-color="rgb(94,46,0)"/><stop offset="0.2515" stop-color="rgb(79,43,0)"/><stop offset="0.3386" stop-color="rgb(59,38,0)"/><stop offset="0.4256" stop-color="rgb(43,33,0)"/><stop offset="0.5126" stop-color="rgb(26,43,0)"/><stop offset="0.5997" stop-color="rgb(18,51,0)"/><stop offset="0.6797" stop-color="rgb(18,92,0)"/><stop offset="0.6954" stop-color="rgb(46,92,0)"/><stop offset="0.7111" stop-color="rgb(82,92,0)"/><stop offset="0.7476" stop-color="rgb(97,92,0)"/><stop offset="0.7911" stop-color="rgb(122,92,0)"/><stop offset="0.8381" stop-color="rgb(158,92,0)"/><stop offset="0.8729" stop-color="rgb(199,92,0)"/><stop offset="0.8990" stop-color="rgb(237,115,0)"/><stop offset="0.9217" stop-color="rgb(255,128,0)"/><stop offset="0.9478" stop-color="rgb(255,102,0)"/><stop offset="1.0000" stop-color="rgb(255,26,0)"/></linearGradient></defs>
<g filter="url(#f3)"><rect x="55.5" y="334" width="574.5" height="160.6" fill="url(#g3)"/><defs><linearGradient id="bf3" gradientUnits="userSpaceOnUse" x1="55" x2="470" y1="0" y2="0"><stop offset="0" stop-color="#000" stop-opacity=".33"/><stop offset=".8" stop-color="#000" stop-opacity=".33"/><stop offset="1" stop-color="#000" stop-opacity="0"/></linearGradient></defs><rect x="55" y="391" width="415" height="16.5" fill="url(#bf3)"/><rect x="55" y="443.5" width="415" height="4.5" fill="url(#bf3)"/><path d="M448 447.5 L590 447 Q602 448.5 607 451 Q600 454 588 454.8 L448 454.8 Z" fill="rgb(10,76,0)" opacity=".92"/><path d="M455 483 L585 482.6 Q596 484 600 485.6 Q594 488 584 488.4 L455 488.4 Z" fill="rgb(10,76,0)" opacity=".9"/><path d="M465 433 L500 432 L520 436 L500 440 L465 439 Z" fill="rgb(13,76,0)" opacity=".75"/><g stroke="rgb(15,102,0)" stroke-linecap="round" fill="none" opacity=".7" filter="url(#sbl)"><path d="M528 357 L545 379" stroke-width="4.5"/><path d="M559 336 L565 349" stroke-width="3"/><path d="M521 437 L527 449" stroke-width="3"/><path d="M550 432 L545 448" stroke-width="3"/><path d="M535 425 L540 445" stroke-width="2"/><path d="M520 394 H535" stroke-width="2.5"/><path d="M500 362 H510" stroke-width="3"/><path d="M585 360 H595" stroke-width="2"/><path d="M520 470 L530 478" stroke-width="4"/><path d="M487 462 L493 468" stroke-width="3"/></g><path d="M609 334 Q607.5 370 608 400 Q608 430 609 446 Q615 448 620 451 Q615 454 609.5 455.5 Q609 475 609 495 L630 495 L630 334 Z" fill="rgb(0,0,0)"/></g><rect x="626.3" y="334" width="1.8" height="161" fill="#6a240e"/></svg>
<svg style="left:634px;top:334px" width="576" height="160.6" viewBox="634 334 576 160.6">
<defs><filter id="f4" filterUnits="userSpaceOnUse" x="634" y="334" width="576" height="160.6" color-interpolation-filters="sRGB">
<feTurbulence type="fractalNoise" baseFrequency="0.6 0.8" numOctaves="3" seed="31" result="t"/>
<feColorMatrix in="t" type="matrix" values="1 0 0 0 0 1 0 0 0 0 1 0 0 0 0 0 0 0 0 1" result="n0"/>
<feComponentTransfer in="n0" result="n"><feFuncR type="linear" slope="2.6" intercept="-0.8"/><feFuncG type="linear" slope="2.6" intercept="-0.8"/><feFuncB type="linear" slope="2.6" intercept="-0.8"/></feComponentTransfer>
<feColorMatrix in="SourceGraphic" type="matrix" values="1 0 0 0 0 1 0 0 0 0 1 0 0 0 0 0 0 0 0 1" result="I"/>
<feColorMatrix in="SourceGraphic" type="matrix" values="0 1 0 0 0 0 1 0 0 0 0 1 0 0 0 0 0 0 0 1" result="A"/>
<feComposite in="I" in2="A" operator="arithmetic" k1="1" k2="0" k3="0" k4="0" result="P"/>
<feComposite in="P" in2="n" operator="arithmetic" k1="1.8" k2="0" k3="0" k4="0" result="Q"/>
<feComposite in="I" in2="P" operator="arithmetic" k1="0" k2="1" k3="-0.9" k4="0" result="T"/>
<feComposite in="T" in2="Q" operator="arithmetic" k1="0" k2="1" k3="1" k4="0" result="R0"/>
<feGaussianBlur in="R0" stdDeviation="0.6" result="R"/>
<feComponentTransfer in="R"><feFuncR type="table" tableValues="0.000 0.133 0.267 0.412 0.561 0.690 0.784 0.894 0.973 1.000 1.000"/><feFuncG type="table" tableValues="0.000 0.012 0.039 0.086 0.149 0.251 0.361 0.510 0.706 0.902 1.000"/><feFuncB type="table" tableValues="0.000 0.008 0.016 0.031 0.051 0.086 0.118 0.125 0.086 0.039 0.094"/></feComponentTransfer>
</filter><linearGradient id="g4" gradientUnits="userSpaceOnUse" x1="634" y1="0" x2="1210" y2="0"><stop offset="0.0000" stop-color="rgb(255,26,0)"/><stop offset="0.0347" stop-color="rgb(255,102,0)"/><stop offset="0.0521" stop-color="rgb(247,128,0)"/><stop offset="0.0660" stop-color="rgb(209,92,0)"/><stop offset="0.0833" stop-color="rgb(166,92,0)"/><stop offset="0.1007" stop-color="rgb(115,92,0)"/><stop offset="0.1181" stop-color="rgb(82,92,0)"/><stop offset="0.1354" stop-color="rgb(51,92,0)"/><stop offset="0.1493" stop-color="rgb(26,92,0)"/><stop offset="0.1632" stop-color="rgb(13,51,0)"/><stop offset="0.2882" stop-color="rgb(13,51,0)"/><stop offset="0.4618" stop-color="rgb(20,43,0)"/><stop offset="0.6354" stop-color="rgb(36,38,0)"/><stop offset="0.8090" stop-color="rgb(56,43,0)"/><stop offset="1.0000" stop-color="rgb(82,51,0)"/></linearGradient></defs>
<g filter="url(#f4)"><rect x="634" y="334" width="576" height="160.6" fill="url(#g4)"/><path d="M722 418 Q703 428 698 447 Q690 470 686 495 L730 495 L730 418 Z" fill="rgb(20,128,0)" opacity=".9"/><path d="M698 446 Q690 470 686 495" stroke="rgb(242,102,0)" stroke-width="1.8" fill="none"/><path d="M700 420 L722 418.5 L703 424 Z" fill="rgb(178,204,0)" opacity=".8"/><path d="M634 334 L653 334 Q653.5 360 655.5 385 Q656 410 654 430 Q652.5 460 653.5 495 L634 495 Z" fill="rgb(0,0,0)"/></g><rect x="637" y="334" width="2" height="161" fill="#6a200c"/></svg>
<div style="left:0px;top:264.7px;width:630px;height:13.5px;background:#f7f7f7;"></div>
<div style="left:0px;top:277.0px;width:630px;height:1.2px;background:#a6a6a6;"></div>
<div style="left:0px;top:264.7px;width:14.7px;height:13.5px;background:#f0f0f0;border-right:1.2px solid #9c9c9c;border-bottom:1.2px solid #9c9c9c;border-top:1px solid #fff;border-left:1px solid #fff;box-sizing:border-box;"></div>
<div style="left:615px;top:264.7px;width:14.7px;height:13.5px;background:#f0f0f0;border-right:1.2px solid #9c9c9c;border-bottom:1.2px solid #9c9c9c;border-top:1px solid #fff;border-left:1px solid #fff;box-sizing:border-box;"></div>
<svg style="left:4.6px;top:268.09999999999997px" width="4" height="7" viewBox="0 0 4 7"><path d="M3.7 0.2 L0.2 3.3 L3.7 6.4 Z" fill="#000"/></svg>
<svg style="left:621.8px;top:268.09999999999997px" width="4" height="7" viewBox="0 0 4 7"><path d="M0.3 0.2 L3.8 3.3 L0.3 6.4 Z" fill="#000"/></svg>
<div style="left:634px;top:264.7px;width:634px;height:13.5px;background:#f7f7f7;"></div>
<div style="left:634px;top:277.0px;width:634px;height:1.2px;background:#a6a6a6;"></div>
<div style="left:634px;top:264.7px;width:14.7px;height:13.5px;background:#f0f0f0;border-right:1.2px solid #9c9c9c;border-bottom:1.2px solid #9c9c9c;border-top:1px solid #fff;border-left:1px solid #fff;box-sizing:border-box;"></div>
<div style="left:1253px;top:264.7px;width:14.7px;height:13.5px;background:#f0f0f0;border-right:1.2px solid #9c9c9c;border-bottom:1.2px solid #9c9c9c;border-top:1px solid #fff;border-left:1px solid #fff;box-sizing:border-box;"></div>
<svg style="left:638.6px;top:268.09999999999997px" width="4" height="7" viewBox="0 0 4 7"><path d="M3.7 0.2 L0.2 3.3 L3.7 6.4 Z" fill="#000"/></svg>
<svg style="left:1259.8px;top:268.09999999999997px" width="4" height="7" viewBox="0 0 4 7"><path d="M0.3 0.2 L3.8 3.3 L0.3 6.4 Z" fill="#000"/></svg>
<div style="left:0px;top:494.5px;width:630px;height:13.5px;background:#f7f7f7;"></div>
<div style="left:0px;top:506.8px;width:630px;height:1.2px;background:#a6a6a6;"></div>
<div style="left:0px;top:494.5px;width:14.7px;height:13.5px;background:#f0f0f0;border-right:1.2px solid #9c9c9c;border-bottom:1.2px solid #9c9c9c;border-top:1px solid #fff;border-left:1px solid #fff;box-sizing:border-box;"></div>
<div style="left:615px;top:494.5px;width:14.7px;height:13.5px;background:#f0f0f0;border-right:1.2px solid #9c9c9c;border-bottom:1.2px solid #9c9c9c;border-top:1px solid #fff;border-left:1px solid #fff;box-sizing:border-box;"></div>
<svg style="left:4.6px;top:497.9px" width="4" height="7" viewBox="0 0 4 7"><path d="M3.7 0.2 L0.2 3.3 L3.7 6.4 Z" fill="#000"/></svg>
<svg style="left:621.8px;top:497.9px" width="4" height="7" viewBox="0 0 4 7"><path d="M0.3 0.2 L3.8 3.3 L0.3 6.4 Z" fill="#000"/></svg>
<div style="left:634px;top:494.5px;width:634px;height:13.5px;background:#f7f7f7;"></div>
<div style="left:634px;top:506.8px;width:634px;height:1.2px;background:#a6a6a6;"></div>
<div style="left:634px;top:494.5px;width:14.7px;height:13.5px;background:#f0f0f0;border-right:1.2px solid #9c9c9c;border-bottom:1.2px solid #9c9c9c;border-top:1px solid #fff;border-left:1px solid #fff;box-sizing:border-box;"></div>
<div style="left:1253px;top:494.5px;width:14.7px;height:13.5px;background:#f0f0f0;border-right:1.2px solid #9c9c9c;border-bottom:1.2px solid #9c9c9c;border-top:1px solid #fff;border-left:1px solid #fff;box-sizing:border-box;"></div>
<svg style="left:638.6px;top:497.9px" width="4" height="7" viewBox="0 0 4 7"><path d="M3.7 0.2 L0.2 3.3 L3.7 6.4 Z" fill="#000"/></svg>
<svg style="left:1259.8px;top:497.9px" width="4" height="7" viewBox="0 0 4 7"><path d="M0.3 0.2 L3.8 3.3 L0.3 6.4 Z" fill="#000"/></svg>
<div style="left:0px;top:508px;width:1270px;height:3px;background:#f0f0f0;"></div>
<div style="left:2.5px;top:511px;width:1.5px;height:137px;background:#e2e2e2;"></div>
<div style="left:3px;top:647px;width:1265px;height:1.3px;background:#8e8e8e;"></div>
<span style="left:8.00px;top:522.03px;font-size:11.5px;line-height:11.5px;color:#111;letter-spacing:-0.405px;">Sidescan Control</span>
<div style="left:92.5px;top:519.5px;width:1px;height:15.5px;background:#8a8a8a;"></div>
<span style="left:97.30px;top:522.03px;font-size:11.5px;line-height:11.5px;color:#111;letter-spacing:-0.545px;">Video Gains</span>
<div style="left:157.5px;top:519.5px;width:1px;height:15.5px;background:#8a8a8a;"></div>
<span style="left:162.00px;top:522.03px;font-size:11.5px;line-height:11.5px;color:#111;letter-spacing:-0.503px;">Display</span>
<div style="left:200px;top:519.5px;width:1px;height:15.5px;background:#8a8a8a;"></div>
<span style="left:205.00px;top:522.03px;font-size:11.5px;line-height:11.5px;color:#111;letter-spacing:-0.002px;">Motion Tolerant</span>
<span style="left:292.00px;top:520.63px;font-size:11.5px;line-height:11.5px;color:#111;letter-spacing:-0.992px;">Disk</span>
<div style="left:323.6px;top:519.5px;width:1.6px;height:15.5px;background:#707070;"></div>
<span style="left:327.30px;top:522.03px;font-size:11.5px;line-height:11.5px;color:#111;letter-spacing:-0.277px;">Bottom Track</span>
<div style="left:395.3px;top:519.5px;width:1px;height:15.5px;background:#8a8a8a;"></div>
<span style="left:400.50px;top:522.03px;font-size:11.5px;line-height:11.5px;color:#111;letter-spacing:-0.746px;">Grids</span>
<div style="left:431.6px;top:519.5px;width:1px;height:15.5px;background:#8a8a8a;"></div>
<span style="left:436.00px;top:522.03px;font-size:11.5px;line-height:11.5px;color:#111;letter-spacing:-0.482px;">Image Capture</span>
<div style="left:510.8px;top:519.5px;width:1px;height:15.5px;background:#8a8a8a;"></div>
<span style="left:514.70px;top:522.03px;font-size:11.5px;line-height:11.5px;color:#111;letter-spacing:-0.562px;">Status</span>
<div style="left:548px;top:519.5px;width:1px;height:15.5px;background:#8a8a8a;"></div>
<span style="left:11.70px;top:544.43px;font-size:11.5px;line-height:11.5px;color:#111;letter-spacing:-0.661px;">Playback File:</span>
<div style="left:89px;top:538.5px;width:225px;height:21.5px;background:#f0f0f0;border-top:1px solid #8c8c8c;border-left:1px solid #8c8c8c;box-sizing:border-box;"></div>
<span style="left:92.00px;top:542.05px;font-size:11px;line-height:11px;color:#858585;letter-spacing:-0.212px;">20250109051308_Binned.jsf</span>
<div style="left:327.3px;top:538.3px;width:74.5px;height:22px;background:#f3f3f3;border:1px solid #747474;box-sizing:border-box;box-shadow:inset 0 0 0 1px #e0e0e0;"></div>
<span style="left:341.50px;top:544.65px;font-size:11px;line-height:11px;color:#a6a6a6;letter-spacing:-0.378px;">Browse ...</span>
<span style="left:518.50px;top:544.43px;font-size:11.5px;line-height:11.5px;color:#111;letter-spacing:-0.500px;">Record File:</span>
<div style="left:588.5px;top:538.5px;width:240px;height:21.5px;background:#fff;border-top:1px solid #8c8c8c;border-left:1px solid #8c8c8c;box-sizing:border-box;"></div>
<span style="left:88.80px;top:566.53px;font-size:11.5px;line-height:11.5px;color:#111;letter-spacing:-0.370px;">C:\Users\k\Desktop\0109\20250109051308_Binned.jsf</span>
<span style="left:327.30px;top:586.03px;font-size:11.5px;line-height:11.5px;color:#111;letter-spacing:-0.440px;">68% Complete</span>
<span style="left:327.30px;top:603.62px;font-size:11.5px;line-height:11.5px;color:#111;letter-spacing:-0.555px;">Speed: 60</span>
<svg style="left:89px;top:585px" width="20" height="21" viewBox="0 0 20 21"><rect width="20" height="21" fill="#8a8a8a"/><rect width="19" height="20" fill="#f4f4f4"/><rect x="1" y="1" width="18" height="19" fill="#9a9a9a"/><rect x="1" y="1" width="17" height="18" fill="#c3c3c3"/><path d="M7 4.5 L13.5 10 L7 15.5 Z" fill="#000"/></svg>
<svg style="left:122px;top:585px" width="20" height="21" viewBox="0 0 20 21"><rect width="20" height="21" fill="#8a8a8a"/><rect width="19" height="20" fill="#f4f4f4"/><rect x="1" y="1" width="18" height="19" fill="#9a9a9a"/><rect x="1" y="1" width="17" height="18" fill="#c3c3c3"/><rect x="6.3" y="5" width="2.2" height="10.5" fill="#000"/><rect x="10.8" y="5" width="2.2" height="10.5" fill="#000"/></svg>
<svg style="left:154.7px;top:585px" width="20" height="21" viewBox="0 0 20 21"><rect width="20" height="21" fill="#8a8a8a"/><rect width="19" height="20" fill="#f4f4f4"/><rect x="1" y="1" width="18" height="19" fill="#9a9a9a"/><rect x="1" y="1" width="17" height="18" fill="#c3c3c3"/><rect x="4.8" y="5" width="10.4" height="10.4" fill="#000"/></svg>
<svg style="left:186px;top:585px" width="20" height="21" viewBox="0 0 20 21"><rect width="20" height="21" fill="#8a8a8a"/><rect width="19" height="20" fill="#f4f4f4"/><rect x="1" y="1" width="18" height="19" fill="#9a9a9a"/><rect x="1" y="1" width="17" height="18" fill="#c3c3c3"/><path d="M9.5 5.5 L4 10 L9.5 14.5 Z M15 5.5 L9.5 10 L15 14.5 Z" fill="#8e8e8e"/></svg>
<svg style="left:218.8px;top:585px" width="20" height="21" viewBox="0 0 20 21"><rect width="20" height="21" fill="#8a8a8a"/><rect width="19" height="20" fill="#f4f4f4"/><rect x="1" y="1" width="18" height="19" fill="#9a9a9a"/><rect x="1" y="1" width="17" height="18" fill="#c3c3c3"/><path d="M4.5 5 L10 10 L4.5 15 Z M10 5 L15.5 10 L10 15 Z" fill="#000"/></svg>
<svg style="left:590px;top:585px" width="20" height="21" viewBox="0 0 20 21"><rect width="20" height="21" fill="#8a8a8a"/><rect width="19" height="20" fill="#f4f4f4"/><rect x="1" y="1" width="18" height="19" fill="#9a9a9a"/><rect x="1" y="1" width="17" height="18" fill="#c3c3c3"/><circle cx="9.7" cy="10.3" r="5.2" fill="#f00000"/></svg>
<svg style="left:621px;top:585px" width="20" height="21" viewBox="0 0 20 21"><rect width="20" height="21" fill="#8a8a8a"/><rect width="19" height="20" fill="#f4f4f4"/><rect x="1" y="1" width="18" height="19" fill="#9a9a9a"/><rect x="1" y="1" width="17" height="18" fill="#c3c3c3"/><rect x="5" y="5.3" width="10" height="10" fill="#848484"/></svg>
<svg style="left:654.7px;top:585px" width="20" height="21" viewBox="0 0 20 21"><rect width="20" height="21" fill="#8a8a8a"/><rect width="19" height="20" fill="#f4f4f4"/><rect x="1" y="1" width="18" height="19" fill="#9a9a9a"/><rect x="1" y="1" width="17" height="18" fill="#c3c3c3"/><path d="M4 3 H11.5 L16 7.5 V17.5 H4 Z" fill="#cfcfcf" stroke="#a0a0a0" stroke-width="1"/><path d="M11.5 3 V7.5 H16" fill="none" stroke="#a0a0a0" stroke-width="1"/></svg>
<span style="left:105.00px;top:658.09px;font-size:7.8px;line-height:7.8px;color:#1a1a1a;letter-spacing:-0.227px;">31 : 37.0786 N</span>
<span style="left:159.00px;top:658.09px;font-size:7.8px;line-height:7.8px;color:#1a1a1a;letter-spacing:-0.062px;">Lon:</span>
<span style="left:178.60px;top:658.09px;font-size:7.8px;line-height:7.8px;color:#1a1a1a;letter-spacing:-0.426px;">121 : 15.7616 E</span>
<span style="left:234.00px;top:658.09px;font-size:7.8px;line-height:7.8px;color:#1a1a1a;letter-spacing:-0.241px;">Course: 0.00</span>
<span style="left:282.60px;top:658.09px;font-size:7.8px;line-height:7.8px;color:#1a1a1a;letter-spacing:-0.564px;">Speed:</span>
<span style="left:309.60px;top:658.09px;font-size:7.8px;line-height:7.8px;color:#1a1a1a;letter-spacing:-0.596px;">0.00</span>
<span style="left:329.80px;top:658.09px;font-size:7.8px;line-height:7.8px;color:#1a1a1a;letter-spacing:-0.829px;">ATD:</span>
<span style="left:349.20px;top:658.09px;font-size:7.8px;line-height:7.8px;color:#1a1a1a;letter-spacing:-0.529px;">0.00</span>
<span style="left:369.30px;top:658.09px;font-size:7.8px;line-height:7.8px;color:#1a1a1a;letter-spacing:-0.115px;">Heading: 159.7</span>
<span style="left:427.00px;top:658.09px;font-size:7.8px;line-height:7.8px;color:#1a1a1a;letter-spacing:-0.020px;">Pitch:</span>
<span style="left:455.00px;top:658.09px;font-size:7.8px;line-height:7.8px;color:#1a1a1a;letter-spacing:-0.922px;">2.2</span>
<span style="left:470.50px;top:658.09px;font-size:7.8px;line-height:7.8px;color:#1a1a1a;letter-spacing:-0.027px;">Roll:</span>
<span style="left:491.80px;top:658.09px;font-size:7.8px;line-height:7.8px;color:#1a1a1a;letter-spacing:-0.146px;">-1.9</span>
<span style="left:510.80px;top:658.09px;font-size:7.8px;line-height:7.8px;color:#1a1a1a;letter-spacing:-0.544px;">Heave:</span>
<span style="left:538.80px;top:658.09px;font-size:7.8px;line-height:7.8px;color:#1a1a1a;letter-spacing:-0.562px;">0.02</span>
<span style="left:558.80px;top:658.09px;font-size:7.8px;line-height:7.8px;color:#1a1a1a;letter-spacing:0.127px;">Altitude:</span>
<span style="left:596.40px;top:658.09px;font-size:7.8px;line-height:7.8px;color:#1a1a1a;letter-spacing:-0.622px;">1.5</span>
<span style="left:612.50px;top:658.09px;font-size:7.8px;line-height:7.8px;color:#1a1a1a;letter-spacing:-0.061px;">Depth: NA</span>
<span style="left:663.00px;top:658.09px;font-size:7.8px;line-height:7.8px;color:#1a1a1a;letter-spacing:-1.141px;">SV:</span>
<span style="left:678.00px;top:658.09px;font-size:7.8px;line-height:7.8px;color:#1a1a1a;letter-spacing:-1.020px;">1451</span>
<span style="left:118.00px;top:670.39px;font-size:7.8px;line-height:7.8px;color:#1a1a1a;letter-spacing:-0.303px;">Date: Jan. 09, 2025</span>
<span style="left:190.00px;top:670.39px;font-size:7.8px;line-height:7.8px;color:#1a1a1a;letter-spacing:-0.551px;">Time:</span>
<span style="left:212.00px;top:670.39px;font-size:7.8px;line-height:7.8px;color:#1a1a1a;letter-spacing:-0.336px;">5:19:20</span>
<span style="left:251.60px;top:670.39px;font-size:7.8px;line-height:7.8px;color:#1a1a1a;letter-spacing:-0.197px;">Power: 100%</span>
<span style="left:310.30px;top:670.39px;font-size:7.8px;line-height:7.8px;color:#1a1a1a;letter-spacing:-0.015px;">Record Dir: Not Found</span>
<div style="left:0px;top:657px;width:4px;height:22px;background:#f0f0f0;"></div>
<span style="left:-1.00px;top:658.09px;font-size:7.8px;line-height:7.8px;color:#1a1a1a;">S</span>
<span style="left:-2.00px;top:669.94px;font-size:8.8px;line-height:8.8px;color:#1a1a1a;">C</span>
<div style="left:884.7px;top:668.3px;width:70.29999999999995px;height:11px;background:#f1f03a;border-top:1px solid #9a9a9a;border-left:1px solid #9a9a9a;box-sizing:border-box;"></div>
<span style="left:887.00px;top:670.79px;font-size:7.8px;line-height:7.8px;color:#111;letter-spacing:-0.092px;">Playback</span>
<div style="left:955px;top:668.3px;width:100px;height:11px;background:#f4f4f4;border-top:1px solid #9a9a9a;border-left:1px solid #9a9a9a;box-sizing:border-box;"></div>
<span style="left:957.30px;top:670.79px;font-size:7.8px;line-height:7.8px;color:#111;letter-spacing:0.041px;">Bathymetry: ON</span>
<div style="left:1055px;top:668.3px;width:79px;height:11px;background:#f4f4f4;border-top:1px solid #9a9a9a;border-left:1px solid #9a9a9a;box-sizing:border-box;"></div>
<span style="left:1057.30px;top:670.79px;font-size:7.8px;line-height:7.8px;color:#111;letter-spacing:-0.306px;">Record: OFF</span>
<div style="left:1134px;top:668.3px;width:60px;height:11px;background:#e0343c;border-top:1px solid #9a9a9a;border-left:1px solid #9a9a9a;box-sizing:border-box;"></div>
<span style="left:1136.30px;top:670.79px;font-size:7.8px;line-height:7.8px;color:#fff;letter-spacing:-0.379px;">NET: OFF</span>
<div style="left:1194px;top:668.3px;width:76px;height:11px;background:#f4f4f4;border-top:1px solid #9a9a9a;border-left:1px solid #9a9a9a;box-sizing:border-box;"></div>
<span style="left:1196.30px;top:670.79px;font-size:7.8px;line-height:7.8px;color:#111;letter-spacing:-0.226px;">Power: OFF</span>
<div style="left:0px;top:679px;width:1270px;height:3px;background:#1c2428;"></div>
<div style="left:203px;top:679px;width:40px;height:3px;background:#5a6266;"></div>
<div style="left:4px;top:657.5px;width:117px;height:21.5px;background:#fff;box-shadow:0 0 6px rgba(0,0,0,0.22);"></div>
<svg style="left:10.5px;top:659.5px" width="19" height="16" viewBox="-1 0 19 16"><rect x="9" y="5.4" width="7.6" height="6" fill="#fff" stroke="#9a9a9a" stroke-width="0.9"/><ellipse cx="6.6" cy="4.1" rx="2.1" ry="2.2" fill="#cc1c40"/><rect x="3" y="5.2" width="7.3" height="1" fill="#7c1424"/><path d="M1.2 7 L10.4 7 L12.7 12.6 L12.7 13 L-0.4 13 L-0.4 12.6 Z" fill="#d21a38"/><rect x="1.4" y="7" width="9" height="1.1" fill="#8a1020"/><path d="M4.2 9.6 h1.1 v2 h-1.1 z M7.6 9.6 h1.1 v2 h-1.1 z M5.9 9.4 h1.2 v3.8 h-1.2 z" fill="#5a0c14"/><rect x="-0.6" y="13" width="13.6" height="1.4" fill="#e4506a"/></svg>
<div style="left:58px;top:664.2px;width:7.5px;height:7.5px;background:#fff;border:1px solid #9a9a9a;box-sizing:border-box;"></div>
<svg style="left:96px;top:663px" width="10" height="10" viewBox="0 0 10 10"><path d="M1 1 L9 9 M9 1 L1 9" stroke="#f3f3f3" stroke-width="1"/></svg>
<div style="left:821.3px;top:287.7px;width:449px;height:174.8px;background:#fff;box-shadow:0 0 0 0.8px rgba(70,70,70,0.55),0 2px 8px 1px rgba(0,0,0,0.45);"></div>
<svg style="left:827.5px;top:294px" width="13" height="11" viewBox="0 0 13 11"><rect x="0.5" y="0.5" width="12" height="10" fill="#e4efec" stroke="#b8d0cc"/><rect x="1.8" y="2.2" width="5" height="6.6" fill="#4f8478"/><rect x="8.5" y="2.2" width="2.6" height="6.6" fill="#f4f8f7"/></svg>
<span style="left:844.50px;top:294.43px;font-size:11.5px;line-height:11.5px;color:#9a9a9a;letter-spacing:-0.335px;">Seafloor</span>
<svg style="left:1238px;top:295px" width="14" height="8" viewBox="0 0 14 8"><path d="M2 4.5 H10" stroke="#ececec" stroke-width="1"/></svg>
<span style="left:826.70px;top:315.02px;font-size:11.5px;line-height:11.5px;color:#8c8c8c;letter-spacing:-0.406px;">View</span>
<div style="left:821.3px;top:329px;width:447.5px;height:133.4px;background:#000;"></div>
<div style="left:827.4px;top:334.0px;width:8px;height:8.7px;background:#b4283c;"></div>
<span style="left:860.80px;top:336.32px;font-size:7.5px;line-height:7.5px;color:#dcdcdc;font-weight:700;font-family:'Liberation Mono',monospace;letter-spacing:-0.239px;">-0.5</span>
<span style="left:883.50px;top:336.32px;font-size:7.5px;line-height:7.5px;color:#dcdcdc;font-weight:700;font-family:'Liberation Mono',monospace;letter-spacing:-0.003px;">Meters</span>
<div style="left:827.4px;top:342.62px;width:8px;height:8.7px;background:#dc3c46;"></div>
<span style="left:860.80px;top:344.87px;font-size:7.5px;line-height:7.5px;color:#dcdcdc;font-weight:700;font-family:'Liberation Mono',monospace;letter-spacing:-0.239px;">-0.0</span>
<div style="left:827.4px;top:351.24px;width:8px;height:8.7px;background:#f05046;"></div>
<span style="left:865.30px;top:353.40px;font-size:7.5px;line-height:7.5px;color:#dcdcdc;font-weight:700;font-family:'Liberation Mono',monospace;letter-spacing:-0.258px;">0.4</span>
<div style="left:827.4px;top:359.86px;width:8px;height:8.7px;background:#fa6e3c;"></div>
<span style="left:865.30px;top:361.94px;font-size:7.5px;line-height:7.5px;color:#dcdcdc;font-weight:700;font-family:'Liberation Mono',monospace;letter-spacing:-0.258px;">0.9</span>
<div style="left:827.4px;top:368.48px;width:8px;height:8.7px;background:#f58c3c;"></div>
<span style="left:865.30px;top:370.49px;font-size:7.5px;line-height:7.5px;color:#dcdcdc;font-weight:700;font-family:'Liberation Mono',monospace;letter-spacing:-0.258px;">1.4</span>
<div style="left:827.4px;top:377.1px;width:8px;height:8.7px;background:#ebA53c;"></div>
<span style="left:865.30px;top:379.02px;font-size:7.5px;line-height:7.5px;color:#dcdcdc;font-weight:700;font-family:'Liberation Mono',monospace;letter-spacing:-0.258px;">1.8</span>
<div style="left:827.4px;top:385.72px;width:8px;height:8.7px;background:#e1b93c;"></div>
<span style="left:865.30px;top:387.56px;font-size:7.5px;line-height:7.5px;color:#dcdcdc;font-weight:700;font-family:'Liberation Mono',monospace;letter-spacing:-0.258px;">2.3</span>
<div style="left:827.4px;top:394.34px;width:8px;height:8.7px;background:#c8c33c;"></div>
<span style="left:865.30px;top:396.10px;font-size:7.5px;line-height:7.5px;color:#dcdcdc;font-weight:700;font-family:'Liberation Mono',monospace;letter-spacing:-0.258px;">2.8</span>
<div style="left:827.4px;top:402.96px;width:8px;height:8.7px;background:#96c846;"></div>
<span style="left:865.30px;top:404.64px;font-size:7.5px;line-height:7.5px;color:#dcdcdc;font-weight:700;font-family:'Liberation Mono',monospace;letter-spacing:-0.258px;">3.2</span>
<div style="left:827.4px;top:411.58px;width:8px;height:8.7px;background:#64c86e;"></div>
<span style="left:865.30px;top:413.18px;font-size:7.5px;line-height:7.5px;color:#dcdcdc;font-weight:700;font-family:'Liberation Mono',monospace;letter-spacing:-0.258px;">3.7</span>
<div style="left:827.4px;top:420.2px;width:8px;height:8.7px;background:#3cc3a0;"></div>
<span style="left:865.30px;top:421.72px;font-size:7.5px;line-height:7.5px;color:#dcdcdc;font-weight:700;font-family:'Liberation Mono',monospace;letter-spacing:-0.258px;">4.1</span>
<div style="left:827.4px;top:428.82px;width:8px;height:8.7px;background:#3cb4dc;"></div>
<span style="left:865.30px;top:430.26px;font-size:7.5px;line-height:7.5px;color:#dcdcdc;font-weight:700;font-family:'Liberation Mono',monospace;letter-spacing:-0.258px;">4.6</span>
<div style="left:827.4px;top:437.44px;width:8px;height:8.7px;background:#46aaf0;"></div>
<span style="left:865.30px;top:438.80px;font-size:7.5px;line-height:7.5px;color:#dcdcdc;font-weight:700;font-family:'Liberation Mono',monospace;letter-spacing:-0.258px;">5.1</span>
<div style="left:827.4px;top:446.06px;width:8px;height:8.7px;background:#28e6fa;"></div>
<span style="left:865.30px;top:447.34px;font-size:7.5px;line-height:7.5px;color:#dcdcdc;font-weight:700;font-family:'Liberation Mono',monospace;letter-spacing:-0.258px;">6.0</span>
<span style="left:883.50px;top:447.34px;font-size:7.5px;line-height:7.5px;color:#dcdcdc;font-weight:700;font-family:'Liberation Mono',monospace;letter-spacing:-0.003px;">Meters</span>
<span style="left:837.50px;top:336.32px;font-size:7.5px;line-height:7.5px;color:#dcdcdc;font-weight:700;font-family:'Liberation Mono',monospace;letter-spacing:-0.016px;">&lt;=</span>
<span style="left:837.50px;top:447.34px;font-size:7.5px;line-height:7.5px;color:#dcdcdc;font-weight:700;font-family:'Liberation Mono',monospace;letter-spacing:-0.016px;">&gt;=</span>
<svg style="left:950px;top:329px" width="260" height="133" viewBox="950 329 260 133">
<defs>
<pattern id="pg" width="2.3" height="2.7" patternUnits="userSpaceOnUse"><rect width="2.3" height="2.7" fill="#000"/><rect x="0.2" y="0.4" width="1.2" height="1.1" fill="#a8a874"/></pattern>
<pattern id="po" width="2.9" height="3.1" patternUnits="userSpaceOnUse" patternTransform="rotate(-62)"><rect width="2.9" height="3.1" fill="#000"/><rect x="0.2" y="0.4" width="1.2" height="1.2" fill="#c4806a"/></pattern>
<pattern id="po2" width="2.8" height="3.0" patternUnits="userSpaceOnUse" patternTransform="rotate(-58)"><rect width="2.8" height="3.0" fill="#000"/><rect x="0.2" y="0.4" width="1.3" height="1.3" fill="#c4806a"/></pattern>
<pattern id="pb" width="2.1" height="2.2" patternUnits="userSpaceOnUse" patternTransform="rotate(-62)"><rect width="2.1" height="2.2" fill="#000"/><rect x="0.2" y="0.3" width="1.3" height="1.3" fill="#e4986c"/></pattern>
<filter id="rough" x="-5%" y="-5%" width="110%" height="110%"><feTurbulence type="fractalNoise" baseFrequency="0.15" numOctaves="2" seed="5"/><feDisplacementMap in="SourceGraphic" scale="7"/></filter>
</defs>
<g filter="url(#rough)">
<path d="M1006 336 L1040 334 L1008 455 L976 452 Z" fill="url(#po2)"/>
<path d="M1036 336 L1112 336 L1060 457 L1004 456 Z" fill="url(#pg)"/>
<path d="M1118 334 L1186 330 L1170 360 L1150 400 L1125 447 L1085 452 L1066 452 Z" fill="url(#po)"/>
<path d="M1127 334 L1135 334 L1074 452 L1066 452 Z" fill="url(#pb)"/>
<path d="M1108 340 L1116 340 L1066 448 L1060 448 Z" fill="#000" opacity=".75"/>
<path d="M1158 336 L1165 336 L1112 440 L1107 440 Z" fill="#000" opacity=".6"/>
</g>
</svg>
<div style="left:819.7px;top:475px;width:451px;height:174.3px;background:#fff;box-shadow:0 0 0 0.8px rgba(70,70,70,0.55),0 2px 8px 1px rgba(0,0,0,0.45);"></div>
<svg style="left:825.5px;top:482px" width="13" height="11" viewBox="0 0 13 11"><rect x="0.5" y="0.5" width="12" height="10" fill="#e4efec" stroke="#b8d0cc"/><rect x="1.8" y="2.2" width="5" height="6.6" fill="#4f8478"/><rect x="8.5" y="2.2" width="2.6" height="6.6" fill="#f4f8f7"/></svg>
<span style="left:842.00px;top:482.32px;font-size:11.5px;line-height:11.5px;color:#9a9a9a;letter-spacing:-0.431px;">Bathymetric Results</span>
<div style="left:1246.5px;top:483px;width:8px;height:8px;background:#fff;border:1px solid #9a9a9a;box-sizing:border-box;"></div>
<span style="left:824.30px;top:502.52px;font-size:11.5px;line-height:11.5px;color:#5a5a5a;letter-spacing:-0.406px;">View</span>
<div style="left:819.7px;top:516px;width:449px;height:120px;background:#000;"></div>
<div style="left:819.7px;top:636px;width:450.3px;height:13.3px;background:#f0f0f0;"></div>
<svg style="left:819.7px;top:516px" width="449" height="120" viewBox="819.7 516 449 120">
<g stroke="#a44ca8" stroke-width="1" fill="none" stroke-dasharray="8 3.5">
<path d="M828 524.9 L1064.7 571.2"/><path d="M1064.7 571.2 L1268.5 532.3"/>
<path d="M874.5 531 V636"/><path d="M1255.7 531 V636"/></g>
<g stroke="#77776a" stroke-width="1" fill="none" stroke-dasharray="1 2.4"><path d="M820 572 H1268"/><path d="M1064.7 528 V636"/></g>
<g stroke="#c8c8c8" stroke-width="1" fill="none" stroke-dasharray="1 2.4"><path d="M1064.7 516 V528"/><path d="M874.5 516 V528"/><path d="M970.2 516 V528"/><path d="M1159 516 V528"/><path d="M1255.7 516 V528"/></g>
<path d="M1060.5 568 L1068.5 575 M1068.5 568 L1060.5 575" stroke="#e070e0" stroke-width="1"/>
<g fill="none" stroke-width="1.1">
<path d="M935 580 Q942 588 952 592 T984 596.5" stroke="#a8b4a0" stroke-dasharray="1 2"/>
<path d="M986 597 Q1010 600.5 1028 598.8 Q1038 596 1047.5 592.5" stroke="#38a838" stroke-dasharray="1.2 1.4"/>
<path d="M1057.5 590 Q1080 585 1106 580.5" stroke="#48c048" stroke-dasharray="2.5 1"/>
<path d="M1106 580.5 L1127 577.5" stroke="#a0c8a0" stroke-dasharray="1 2"/>
</g></svg>
<span style="left:877.00px;top:518.18px;font-size:7.6px;line-height:7.6px;color:#dcdcdc;letter-spacing:-0.430px;">-20 M</span>
<span style="left:972.00px;top:518.18px;font-size:7.6px;line-height:7.6px;color:#dcdcdc;letter-spacing:-0.505px;">-10 M</span>
<span style="left:1140.80px;top:518.18px;font-size:7.6px;line-height:7.6px;color:#dcdcdc;letter-spacing:-0.464px;">10 M</span>
<span style="left:1235.50px;top:518.18px;font-size:7.6px;line-height:7.6px;color:#dcdcdc;letter-spacing:-0.464px;">20 M</span>
<span style="left:820.00px;top:641.58px;font-size:7.6px;line-height:7.6px;color:#222;letter-spacing:-0.426px;">Processed Pings:</span>
<span style="left:879.70px;top:641.58px;font-size:7.6px;line-height:7.6px;color:#222;letter-spacing:-0.409px;">177400</span>
<span style="left:932.40px;top:641.58px;font-size:7.6px;line-height:7.6px;color:#222;letter-spacing:-0.279px;">Detected Altitudes:</span>
<span style="left:1005.30px;top:641.58px;font-size:7.6px;line-height:7.6px;color:#222;letter-spacing:-0.329px;">175826</span>
<span style="left:1051.20px;top:641.58px;font-size:7.6px;line-height:7.6px;color:#222;letter-spacing:-0.434px;">Angle Sets:</span>
<span style="left:1091.40px;top:641.58px;font-size:7.6px;line-height:7.6px;color:#222;letter-spacing:-0.173px;">177400 / 177400</span>
</body></html>
